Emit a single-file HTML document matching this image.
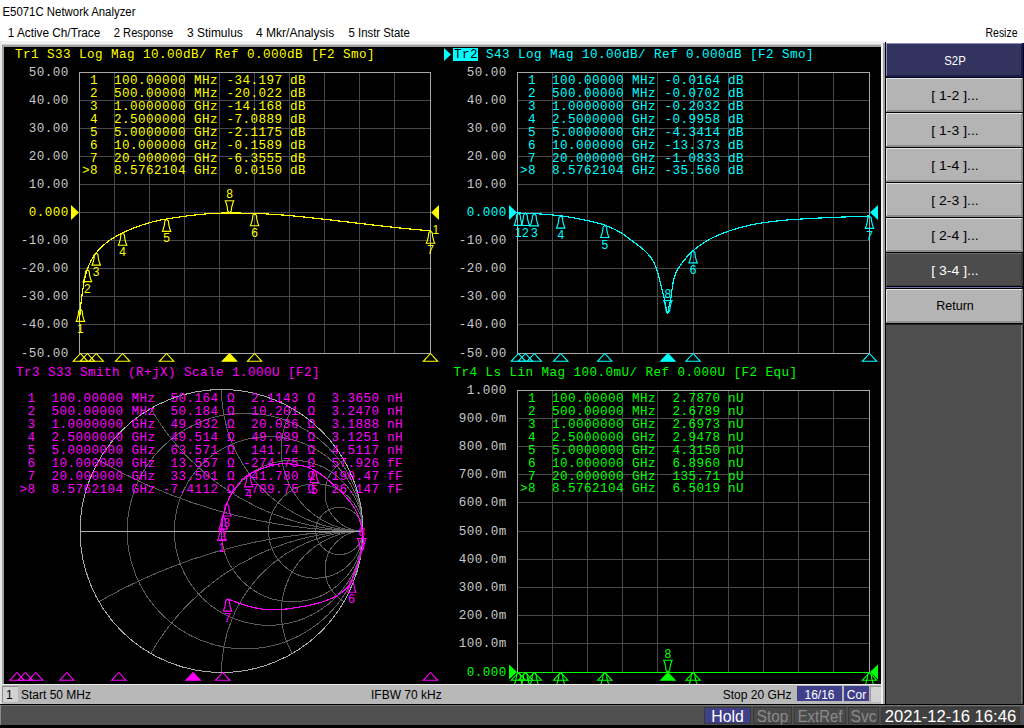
<!DOCTYPE html>
<html><head><meta charset="utf-8"><style>html,body{margin:0;padding:0;background:#fff;overflow:hidden}svg{display:block}text{white-space:pre}</style></head>
<body><svg width="1024" height="728" viewBox="0 0 1024 728">
<rect x="0" y="0" width="1024" height="728" fill="#ffffff" />
<text x="2.5" y="15.6" fill="#000" font-family="Liberation Sans, sans-serif" font-size="12" textLength="133" lengthAdjust="spacingAndGlyphs">E5071C Network Analyzer</text>
<text x="7.8" y="36.7" fill="#000" font-family="Liberation Sans, sans-serif" font-size="12" textLength="92.5" lengthAdjust="spacingAndGlyphs">1 Active Ch/Trace</text>
<text x="113.8" y="36.7" fill="#000" font-family="Liberation Sans, sans-serif" font-size="12" textLength="59.5" lengthAdjust="spacingAndGlyphs">2 Response</text>
<text x="187" y="36.7" fill="#000" font-family="Liberation Sans, sans-serif" font-size="12" textLength="55.8" lengthAdjust="spacingAndGlyphs">3 Stimulus</text>
<text x="256" y="36.7" fill="#000" font-family="Liberation Sans, sans-serif" font-size="12" textLength="78.3" lengthAdjust="spacingAndGlyphs">4 Mkr/Analysis</text>
<text x="348.5" y="36.7" fill="#000" font-family="Liberation Sans, sans-serif" font-size="12" textLength="61.3" lengthAdjust="spacingAndGlyphs">5 Instr State</text>
<text x="985.5" y="36.7" fill="#000" font-family="Liberation Sans, sans-serif" font-size="12" textLength="32" lengthAdjust="spacingAndGlyphs">Resize</text>
<rect x="0" y="41" width="886" height="3" fill="#f0f0f0" />
<rect x="0" y="44" width="886" height="1" fill="#d0d0d0" />
<rect x="0" y="45" width="886" height="2" fill="#a0a0a0" />
<rect x="0" y="41" width="2" height="643" fill="#e8e8e8" />
<rect x="2" y="45" width="2" height="639" fill="#a0a0a0" />
<rect x="4" y="47" width="877" height="637" fill="#000000" />
<rect x="881" y="41" width="2" height="663" fill="#f0f0f0" />
<rect x="883" y="43" width="2" height="661" fill="#a0a0a0" />
<rect x="885" y="42" width="1" height="662" fill="#000000" />
<rect x="886" y="43" width="138" height="661" fill="#4e4e4e" />
<rect x="1023" y="43" width="1" height="661" fill="#000000" />
<rect x="886" y="43" width="138" height="35" fill="#000028" />
<rect x="886" y="43" width="137" height="34" fill="#1c1c40" />
<rect x="886" y="43" width="135" height="32" fill="#33335f" />
<rect x="886" y="43" width="136" height="1" fill="#8c8cc8" />
<rect x="886" y="43" width="1" height="33" fill="#8c8cc8" />
<text x="955" y="65" fill="#ffffff" font-family="Liberation Sans, sans-serif" font-size="13" text-anchor="middle" textLength="21.5" lengthAdjust="spacingAndGlyphs">S2P</text>
<rect x="886" y="78" width="138" height="35" fill="#000000" />
<rect x="886" y="78" width="137" height="34" fill="#8e8e8e" />
<rect x="886" y="78" width="135" height="32" fill="#b4b4b4" />
<rect x="886" y="78" width="136" height="1" fill="#e6e6e6" />
<rect x="886" y="78" width="1" height="33" fill="#e6e6e6" />
<text x="955" y="100" fill="#000000" font-family="Liberation Sans, sans-serif" font-size="13" text-anchor="middle" textLength="47.5" lengthAdjust="spacingAndGlyphs">[ 1-2 ]...</text>
<rect x="886" y="113" width="138" height="35" fill="#000000" />
<rect x="886" y="113" width="137" height="34" fill="#8e8e8e" />
<rect x="886" y="113" width="135" height="32" fill="#b4b4b4" />
<rect x="886" y="113" width="136" height="1" fill="#e6e6e6" />
<rect x="886" y="113" width="1" height="33" fill="#e6e6e6" />
<text x="955" y="135" fill="#000000" font-family="Liberation Sans, sans-serif" font-size="13" text-anchor="middle" textLength="47.5" lengthAdjust="spacingAndGlyphs">[ 1-3 ]...</text>
<rect x="886" y="148" width="138" height="35" fill="#000000" />
<rect x="886" y="148" width="137" height="34" fill="#8e8e8e" />
<rect x="886" y="148" width="135" height="32" fill="#b4b4b4" />
<rect x="886" y="148" width="136" height="1" fill="#e6e6e6" />
<rect x="886" y="148" width="1" height="33" fill="#e6e6e6" />
<text x="955" y="170" fill="#000000" font-family="Liberation Sans, sans-serif" font-size="13" text-anchor="middle" textLength="47.5" lengthAdjust="spacingAndGlyphs">[ 1-4 ]...</text>
<rect x="886" y="183" width="138" height="35" fill="#000000" />
<rect x="886" y="183" width="137" height="34" fill="#8e8e8e" />
<rect x="886" y="183" width="135" height="32" fill="#b4b4b4" />
<rect x="886" y="183" width="136" height="1" fill="#e6e6e6" />
<rect x="886" y="183" width="1" height="33" fill="#e6e6e6" />
<text x="955" y="205" fill="#000000" font-family="Liberation Sans, sans-serif" font-size="13" text-anchor="middle" textLength="47.5" lengthAdjust="spacingAndGlyphs">[ 2-3 ]...</text>
<rect x="886" y="218" width="138" height="35" fill="#000000" />
<rect x="886" y="218" width="137" height="34" fill="#8e8e8e" />
<rect x="886" y="218" width="135" height="32" fill="#b4b4b4" />
<rect x="886" y="218" width="136" height="1" fill="#e6e6e6" />
<rect x="886" y="218" width="1" height="33" fill="#e6e6e6" />
<text x="955" y="240" fill="#000000" font-family="Liberation Sans, sans-serif" font-size="13" text-anchor="middle" textLength="47.5" lengthAdjust="spacingAndGlyphs">[ 2-4 ]...</text>
<rect x="886" y="253" width="138" height="35" fill="#000000" />
<rect x="886" y="253" width="137" height="34" fill="#3a3a3a" />
<rect x="886" y="253" width="135" height="32" fill="#4c4c4c" />
<rect x="886" y="253" width="136" height="1" fill="#6a6a6a" />
<rect x="886" y="253" width="1" height="33" fill="#6a6a6a" />
<text x="955" y="275" fill="#ffffff" font-family="Liberation Sans, sans-serif" font-size="13" text-anchor="middle" textLength="47.5" lengthAdjust="spacingAndGlyphs">[ 3-4 ]...</text>
<rect x="886" y="286" width="137" height="4" fill="#000000" />
<rect x="886" y="287" width="136" height="1" fill="#6c6cb0" />
<rect x="886" y="289" width="138" height="35" fill="#000000" />
<rect x="886" y="289" width="137" height="34" fill="#8e8e8e" />
<rect x="886" y="289" width="135" height="32" fill="#b4b4b4" />
<rect x="886" y="289" width="136" height="1" fill="#e6e6e6" />
<rect x="886" y="289" width="1" height="33" fill="#e6e6e6" />
<text x="955" y="310" fill="#000000" font-family="Liberation Sans, sans-serif" font-size="13" text-anchor="middle" textLength="37.5" lengthAdjust="spacingAndGlyphs">Return</text>
<rect x="886" y="324" width="136" height="1" fill="#202020" />
<rect x="1021" y="325" width="1" height="378" fill="#7a7a7a" />
<rect x="0" y="684" width="881" height="20" fill="#b8b8b8" />
<rect x="0" y="684" width="881" height="1" fill="#ececec" />
<rect x="0" y="684" width="2" height="20" fill="#e0e0e0" />
<rect x="2" y="686" width="16" height="16" fill="#8c8c8c" />
<rect x="3" y="687" width="15" height="15" fill="#d2d2d2" />
<text x="6" y="698.7" fill="#000" font-family="Liberation Sans, sans-serif" font-size="12" >1</text>
<text x="21" y="698.7" fill="#000" font-family="Liberation Sans, sans-serif" font-size="12" >Start 50 MHz</text>
<text x="371" y="698.7" fill="#000" font-family="Liberation Sans, sans-serif" font-size="12" >IFBW 70 kHz</text>
<text x="722.7" y="698.7" fill="#000" font-family="Liberation Sans, sans-serif" font-size="12" >Stop 20 GHz</text>
<rect x="797" y="686" width="45" height="15" fill="#3f3f8a" />
<text x="819.5" y="699" fill="#fff" font-family="Liberation Sans, sans-serif" font-size="12" text-anchor="middle" >16/16</text>
<rect x="844" y="686" width="25" height="15" fill="#3f3f8a" />
<text x="856.5" y="699" fill="#fff" font-family="Liberation Sans, sans-serif" font-size="12" text-anchor="middle" >Cor</text>
<rect x="870" y="686" width="11" height="16" fill="#9a9a9a" />
<rect x="871" y="687" width="10" height="15" fill="#d2d2d2" />
<rect x="0" y="704" width="1024" height="24" fill="#000000" />
<rect x="0" y="705" width="1024" height="20" fill="#505050" />
<rect x="0" y="705" width="1024" height="1" fill="#707070" />
<rect x="0" y="705" width="1" height="20" fill="#8a8a8a" />
<rect x="704" y="707" width="47" height="17" fill="#383838" />
<rect x="705" y="708" width="45" height="15" fill="#3f3f8a" />
<text x="727.5" y="721.5" fill="#ffffff" font-family="Liberation Sans, sans-serif" font-size="16" text-anchor="middle" textLength="32.5" lengthAdjust="spacingAndGlyphs">Hold</text>
<rect x="753" y="707" width="39" height="17" fill="#383838" />
<rect x="754" y="708" width="37" height="15" fill="#4a4a4a" />
<text x="772.5" y="721.5" fill="#8a8a8a" font-family="Liberation Sans, sans-serif" font-size="16" text-anchor="middle" textLength="31.3" lengthAdjust="spacingAndGlyphs">Stop</text>
<rect x="794" y="707" width="52" height="17" fill="#383838" />
<rect x="795" y="708" width="50" height="15" fill="#4a4a4a" />
<text x="820.0" y="721.5" fill="#8a8a8a" font-family="Liberation Sans, sans-serif" font-size="16" text-anchor="middle" textLength="44.6" lengthAdjust="spacingAndGlyphs">ExtRef</text>
<rect x="848" y="707" width="31" height="17" fill="#383838" />
<rect x="849" y="708" width="29" height="15" fill="#4a4a4a" />
<text x="863.5" y="721.5" fill="#8a8a8a" font-family="Liberation Sans, sans-serif" font-size="16" text-anchor="middle" textLength="26" lengthAdjust="spacingAndGlyphs">Svc</text>
<rect x="881" y="707" width="139" height="17" fill="#383838" />
<rect x="882" y="708" width="137" height="15" fill="#404040" />
<text x="950.5" y="721.5" fill="#ffffff" font-family="Liberation Sans, sans-serif" font-size="16" text-anchor="middle" textLength="131.5" lengthAdjust="spacingAndGlyphs">2021-12-16 16:46</text>
<clipPath id="disp"><rect x="4" y="47" width="877" height="637"/></clipPath>
<g clip-path="url(#disp)">
<text x="15" y="58" fill="#ffff00" font-family="Liberation Mono, monospace" font-size="12.6" letter-spacing="0.44" >Tr1 S33 Log Mag 10.00dB/ Ref 0.000dB [F2 Smo]</text>
<path d="M444 48L451 54.5L444 61Z" fill="#00ffff"/>
<rect x="453" y="48" width="25" height="13" fill="#00ffff" />
<text x="454" y="58" fill="#000" font-family="Liberation Mono, monospace" font-size="12.6" letter-spacing="0.44" >Tr2</text>
<text x="486" y="58" fill="#00ffff" font-family="Liberation Mono, monospace" font-size="12.6" letter-spacing="0.44" >S43 Log Mag 10.00dB/ Ref 0.000dB [F2 Smo]</text>
<text x="16" y="376" fill="#ff00ff" font-family="Liberation Mono, monospace" font-size="12.6" letter-spacing="0.44" >Tr3 S33 Smith (R+jX) Scale 1.000U [F2]</text>
<text x="453.5" y="376" fill="#00ff00" font-family="Liberation Mono, monospace" font-size="12.6" letter-spacing="0.44" >Tr4 Ls Lin Mag 100.0mU/ Ref 0.000U [F2 Equ]</text>
<rect x="114" y="72" width="1" height="281" fill="#484848"/>
<rect x="79" y="100" width="351" height="1" fill="#484848"/>
<rect x="149" y="72" width="1" height="281" fill="#484848"/>
<rect x="79" y="128" width="351" height="1" fill="#484848"/>
<rect x="184" y="72" width="1" height="281" fill="#484848"/>
<rect x="79" y="156" width="351" height="1" fill="#484848"/>
<rect x="219" y="72" width="1" height="281" fill="#484848"/>
<rect x="79" y="184" width="351" height="1" fill="#484848"/>
<rect x="254" y="72" width="1" height="281" fill="#484848"/>
<rect x="79" y="212" width="351" height="1" fill="#484848"/>
<rect x="289" y="72" width="1" height="281" fill="#484848"/>
<rect x="79" y="240" width="351" height="1" fill="#484848"/>
<rect x="324" y="72" width="1" height="281" fill="#484848"/>
<rect x="79" y="268" width="351" height="1" fill="#484848"/>
<rect x="359" y="72" width="1" height="281" fill="#484848"/>
<rect x="79" y="296" width="351" height="1" fill="#484848"/>
<rect x="394" y="72" width="1" height="281" fill="#484848"/>
<rect x="79" y="324" width="351" height="1" fill="#484848"/>
<rect x="79" y="72" width="352" height="1" fill="#a8a8a8"/>
<rect x="79" y="353" width="352" height="1" fill="#a8a8a8"/>
<rect x="79" y="72" width="1" height="282" fill="#a8a8a8"/>
<rect x="430" y="72" width="1" height="282" fill="#a8a8a8"/>
<text x="68.7" y="76" fill="#c8c8c8" font-family="Liberation Mono, monospace" font-size="12.6" letter-spacing="0.44" text-anchor="end" >50.00</text>
<text x="68.7" y="104" fill="#c8c8c8" font-family="Liberation Mono, monospace" font-size="12.6" letter-spacing="0.44" text-anchor="end" >40.00</text>
<text x="68.7" y="132" fill="#c8c8c8" font-family="Liberation Mono, monospace" font-size="12.6" letter-spacing="0.44" text-anchor="end" >30.00</text>
<text x="68.7" y="160" fill="#c8c8c8" font-family="Liberation Mono, monospace" font-size="12.6" letter-spacing="0.44" text-anchor="end" >20.00</text>
<text x="68.7" y="188" fill="#c8c8c8" font-family="Liberation Mono, monospace" font-size="12.6" letter-spacing="0.44" text-anchor="end" >10.00</text>
<text x="68.7" y="216" fill="#ffff00" font-family="Liberation Mono, monospace" font-size="12.6" letter-spacing="0.44" text-anchor="end" >0.000</text>
<text x="68.7" y="244" fill="#c8c8c8" font-family="Liberation Mono, monospace" font-size="12.6" letter-spacing="0.44" text-anchor="end" >-10.00</text>
<text x="68.7" y="272" fill="#c8c8c8" font-family="Liberation Mono, monospace" font-size="12.6" letter-spacing="0.44" text-anchor="end" >-20.00</text>
<text x="68.7" y="300" fill="#c8c8c8" font-family="Liberation Mono, monospace" font-size="12.6" letter-spacing="0.44" text-anchor="end" >-30.00</text>
<text x="68.7" y="328" fill="#c8c8c8" font-family="Liberation Mono, monospace" font-size="12.6" letter-spacing="0.44" text-anchor="end" >-40.00</text>
<text x="68.7" y="357" fill="#c8c8c8" font-family="Liberation Mono, monospace" font-size="12.6" letter-spacing="0.44" text-anchor="end" >-50.00</text>
<path d="M71 205.0L79 212.5L71 220.0Z" fill="#ffff00"/>
<path d="M439 205.0L431 212.5L439 220.0Z" fill="#ffff00"/>
<text x="90" y="83.8" fill="#ffff00" font-family="Liberation Mono, monospace" font-size="12.6" letter-spacing="0.44" >1</text>
<text x="114" y="83.8" fill="#ffff00" font-family="Liberation Mono, monospace" font-size="12.6" letter-spacing="0.44" >100.00000</text>
<text x="194" y="83.8" fill="#ffff00" font-family="Liberation Mono, monospace" font-size="12.6" letter-spacing="0.44" >MHz</text>
<text x="282.5" y="83.8" fill="#ffff00" font-family="Liberation Mono, monospace" font-size="12.6" letter-spacing="0.44" text-anchor="end" >-34.197</text>
<text x="290" y="83.8" fill="#ffff00" font-family="Liberation Mono, monospace" font-size="12.6" letter-spacing="0.44" >dB</text>
<text x="90" y="96.75" fill="#ffff00" font-family="Liberation Mono, monospace" font-size="12.6" letter-spacing="0.44" >2</text>
<text x="114" y="96.75" fill="#ffff00" font-family="Liberation Mono, monospace" font-size="12.6" letter-spacing="0.44" >500.00000</text>
<text x="194" y="96.75" fill="#ffff00" font-family="Liberation Mono, monospace" font-size="12.6" letter-spacing="0.44" >MHz</text>
<text x="282.5" y="96.75" fill="#ffff00" font-family="Liberation Mono, monospace" font-size="12.6" letter-spacing="0.44" text-anchor="end" >-20.022</text>
<text x="290" y="96.75" fill="#ffff00" font-family="Liberation Mono, monospace" font-size="12.6" letter-spacing="0.44" >dB</text>
<text x="90" y="109.69999999999999" fill="#ffff00" font-family="Liberation Mono, monospace" font-size="12.6" letter-spacing="0.44" >3</text>
<text x="114" y="109.69999999999999" fill="#ffff00" font-family="Liberation Mono, monospace" font-size="12.6" letter-spacing="0.44" >1.0000000</text>
<text x="194" y="109.69999999999999" fill="#ffff00" font-family="Liberation Mono, monospace" font-size="12.6" letter-spacing="0.44" >GHz</text>
<text x="282.5" y="109.69999999999999" fill="#ffff00" font-family="Liberation Mono, monospace" font-size="12.6" letter-spacing="0.44" text-anchor="end" >-14.168</text>
<text x="290" y="109.69999999999999" fill="#ffff00" font-family="Liberation Mono, monospace" font-size="12.6" letter-spacing="0.44" >dB</text>
<text x="90" y="122.64999999999999" fill="#ffff00" font-family="Liberation Mono, monospace" font-size="12.6" letter-spacing="0.44" >4</text>
<text x="114" y="122.64999999999999" fill="#ffff00" font-family="Liberation Mono, monospace" font-size="12.6" letter-spacing="0.44" >2.5000000</text>
<text x="194" y="122.64999999999999" fill="#ffff00" font-family="Liberation Mono, monospace" font-size="12.6" letter-spacing="0.44" >GHz</text>
<text x="282.5" y="122.64999999999999" fill="#ffff00" font-family="Liberation Mono, monospace" font-size="12.6" letter-spacing="0.44" text-anchor="end" >-7.0889</text>
<text x="290" y="122.64999999999999" fill="#ffff00" font-family="Liberation Mono, monospace" font-size="12.6" letter-spacing="0.44" >dB</text>
<text x="90" y="135.6" fill="#ffff00" font-family="Liberation Mono, monospace" font-size="12.6" letter-spacing="0.44" >5</text>
<text x="114" y="135.6" fill="#ffff00" font-family="Liberation Mono, monospace" font-size="12.6" letter-spacing="0.44" >5.0000000</text>
<text x="194" y="135.6" fill="#ffff00" font-family="Liberation Mono, monospace" font-size="12.6" letter-spacing="0.44" >GHz</text>
<text x="282.5" y="135.6" fill="#ffff00" font-family="Liberation Mono, monospace" font-size="12.6" letter-spacing="0.44" text-anchor="end" >-2.1175</text>
<text x="290" y="135.6" fill="#ffff00" font-family="Liberation Mono, monospace" font-size="12.6" letter-spacing="0.44" >dB</text>
<text x="90" y="148.55" fill="#ffff00" font-family="Liberation Mono, monospace" font-size="12.6" letter-spacing="0.44" >6</text>
<text x="114" y="148.55" fill="#ffff00" font-family="Liberation Mono, monospace" font-size="12.6" letter-spacing="0.44" >10.000000</text>
<text x="194" y="148.55" fill="#ffff00" font-family="Liberation Mono, monospace" font-size="12.6" letter-spacing="0.44" >GHz</text>
<text x="282.5" y="148.55" fill="#ffff00" font-family="Liberation Mono, monospace" font-size="12.6" letter-spacing="0.44" text-anchor="end" >-0.1589</text>
<text x="290" y="148.55" fill="#ffff00" font-family="Liberation Mono, monospace" font-size="12.6" letter-spacing="0.44" >dB</text>
<text x="90" y="161.5" fill="#ffff00" font-family="Liberation Mono, monospace" font-size="12.6" letter-spacing="0.44" >7</text>
<text x="114" y="161.5" fill="#ffff00" font-family="Liberation Mono, monospace" font-size="12.6" letter-spacing="0.44" >20.000000</text>
<text x="194" y="161.5" fill="#ffff00" font-family="Liberation Mono, monospace" font-size="12.6" letter-spacing="0.44" >GHz</text>
<text x="282.5" y="161.5" fill="#ffff00" font-family="Liberation Mono, monospace" font-size="12.6" letter-spacing="0.44" text-anchor="end" >-6.3555</text>
<text x="290" y="161.5" fill="#ffff00" font-family="Liberation Mono, monospace" font-size="12.6" letter-spacing="0.44" >dB</text>
<text x="82" y="174.45" fill="#ffff00" font-family="Liberation Mono, monospace" font-size="12.6" letter-spacing="0.44" >&gt;8</text>
<text x="114" y="174.45" fill="#ffff00" font-family="Liberation Mono, monospace" font-size="12.6" letter-spacing="0.44" >8.5762104</text>
<text x="194" y="174.45" fill="#ffff00" font-family="Liberation Mono, monospace" font-size="12.6" letter-spacing="0.44" >GHz</text>
<text x="282.5" y="174.45" fill="#ffff00" font-family="Liberation Mono, monospace" font-size="12.6" letter-spacing="0.44" text-anchor="end" >0.0150</text>
<text x="290" y="174.45" fill="#ffff00" font-family="Liberation Mono, monospace" font-size="12.6" letter-spacing="0.44" >dB</text>
<polyline points="79.50,321.19 79.75,317.20 80.00,313.62 80.25,310.50 80.50,307.81 80.75,305.33 81.01,303.01 81.26,300.82 81.51,298.74 81.76,296.77 82.01,294.89 82.26,293.11 82.51,291.40 82.76,289.77 83.01,288.21 83.26,286.71 83.51,285.28 83.77,283.91 84.02,282.59 84.27,281.33 84.52,280.12 84.77,278.95 85.02,277.84 85.27,276.77 85.52,275.74 85.77,274.76 86.02,273.81 86.27,272.91 86.53,272.04 86.78,271.22 87.03,270.42 87.28,269.67 87.53,268.94 87.78,268.25 88.03,267.57 88.28,266.91 88.53,266.27 88.78,265.65 89.03,265.05 89.28,264.46 89.54,263.89 89.79,263.34 90.04,262.80 90.29,262.27 90.54,261.76 90.79,261.26 91.04,260.77 91.29,260.29 91.54,259.83 91.79,259.38 92.04,258.93 92.30,258.50 92.55,258.08 92.80,257.66 93.05,257.26 93.30,256.86 93.55,256.48 93.80,256.10 94.05,255.73 94.30,255.36 94.55,255.01 94.80,254.66 95.06,254.31 95.31,253.98 95.56,253.65 95.81,253.32 96.06,253.01 96.31,252.69 96.56,252.39 96.81,252.08 97.06,251.78 97.31,251.49 97.56,251.19 97.82,250.90 98.07,250.62 98.32,250.34 98.57,250.06 98.82,249.78 99.07,249.51 99.32,249.25 99.57,248.98 99.82,248.72 100.07,248.46 100.32,248.20 100.58,247.95 100.83,247.70 101.08,247.45 101.33,247.21 101.58,246.97 101.83,246.73 102.08,246.49 102.33,246.26 102.58,246.02 102.83,245.79 103.08,245.57 103.33,245.34 103.59,245.12 103.84,244.90 104.09,244.68 104.34,244.47 104.59,244.26 104.84,244.04 105.09,243.84 105.34,243.63 105.59,243.42 105.84,243.22 106.09,243.02 106.35,242.82 106.60,242.62 106.85,242.43 107.10,242.23 107.35,242.04 107.60,241.85 107.85,241.66 108.10,241.48 108.35,241.29 108.60,241.11 108.85,240.93 109.11,240.75 109.36,240.57 109.61,240.39 109.86,240.22 110.11,240.04 110.36,239.87 110.61,239.70 110.86,239.53 111.11,239.36 111.36,239.20 111.61,239.03 111.87,238.87 112.12,238.71 112.37,238.55 112.62,238.39 112.87,238.23 113.12,238.07 113.37,237.92 113.62,237.76 113.87,237.61 114.12,237.46 114.37,237.30 114.63,237.15 114.88,237.01 115.13,236.86 115.38,236.71 115.63,236.57 115.88,236.42 116.13,236.28 116.38,236.14 116.63,236.00 116.88,235.86 117.13,235.72 117.38,235.58 117.64,235.44 117.89,235.31 118.14,235.17 118.39,235.04 118.64,234.90 118.89,234.77 119.14,234.64 119.39,234.51 119.64,234.38 119.89,234.25 120.14,234.13 120.40,234.00 120.65,233.87 120.90,233.75 121.15,233.62 121.40,233.50 121.65,233.38 121.90,233.26 122.15,233.14 122.40,233.02 122.65,232.90 122.90,232.78 123.16,232.66 123.41,232.54 123.66,232.42 123.91,232.31 124.16,232.19 124.41,232.07 124.66,231.96 124.91,231.84 125.16,231.73 125.41,231.61 125.66,231.50 125.92,231.39 126.17,231.27 126.42,231.16 126.67,231.05 126.92,230.93 127.17,230.82 127.42,230.71 127.67,230.60 127.92,230.49 128.17,230.38 128.42,230.27 128.68,230.16 128.93,230.05 129.18,229.95 129.43,229.84 129.68,229.73 129.93,229.62 130.18,229.52 130.43,229.41 130.68,229.31 130.93,229.20 131.18,229.10 131.43,228.99 131.69,228.89 131.94,228.79 132.19,228.68 132.44,228.58 132.69,228.48 132.94,228.38 133.19,228.28 133.44,228.18 133.69,228.08 133.94,227.98 134.19,227.88 134.45,227.78 134.70,227.68 134.95,227.58 135.20,227.49 135.45,227.39 135.70,227.29 135.95,227.20 136.20,227.10 136.45,227.01 136.70,226.91 136.95,226.82 137.21,226.72 137.46,226.63 137.71,226.54 137.96,226.45 138.21,226.35 138.46,226.26 138.71,226.17 138.96,226.08 139.21,225.99 139.46,225.90 139.71,225.81 139.97,225.72 140.22,225.64 140.47,225.55 140.72,225.46 140.97,225.38 141.22,225.29 141.47,225.20 141.72,225.12 141.97,225.03 142.22,224.95 142.47,224.86 142.73,224.78 142.98,224.70 143.23,224.61 143.48,224.53 143.73,224.45 143.98,224.37 144.23,224.29 144.48,224.21 144.73,224.13 144.98,224.05 145.23,223.97 145.48,223.89 145.74,223.81 145.99,223.74 146.24,223.66 146.49,223.58 146.74,223.51 146.99,223.43 147.24,223.36 147.49,223.28 147.74,223.21 147.99,223.13 148.24,223.06 148.50,222.99 148.75,222.91 149.00,222.84 149.25,222.77 149.50,222.70 149.75,222.63 150.00,222.56 150.25,222.49 150.50,222.42 150.75,222.35 151.00,222.28 151.26,222.22 151.51,222.15 151.76,222.08 152.01,222.02 152.26,221.95 152.51,221.88 152.76,221.82 153.01,221.75 153.26,221.69 153.51,221.63 153.76,221.56 154.02,221.50 154.27,221.44 154.52,221.38 154.77,221.32 155.02,221.26 155.27,221.19 155.52,221.14 155.77,221.08 156.02,221.02 156.27,220.96 156.52,220.90 156.78,220.84 157.03,220.79 157.28,220.73 157.53,220.67 157.78,220.62 158.03,220.56 158.28,220.51 158.53,220.45 158.78,220.40 159.03,220.34 159.28,220.29 159.54,220.24 159.79,220.19 160.04,220.14 160.29,220.08 160.54,220.03 160.79,219.98 161.04,219.93 161.29,219.88 161.54,219.84 161.79,219.79 162.04,219.74 162.29,219.69 162.55,219.64 162.80,219.60 163.05,219.55 163.30,219.51 163.55,219.46 163.80,219.42 164.05,219.37 164.30,219.33 164.55,219.29 164.80,219.24 165.05,219.20 165.31,219.16 165.56,219.12 165.81,219.08 166.06,219.03 166.31,218.99 166.56,218.95 166.81,218.92 167.06,218.88 167.31,218.84 167.56,218.80 167.81,218.76 168.07,218.72 168.32,218.68 168.57,218.64 168.82,218.60 169.07,218.56 169.32,218.52 169.57,218.48 169.82,218.44 170.07,218.41 170.32,218.37 170.57,218.33 170.83,218.29 171.08,218.25 171.33,218.21 171.58,218.17 171.83,218.13 172.08,218.10 172.33,218.06 172.58,218.02 172.83,217.98 173.08,217.94 173.33,217.90 173.59,217.87 173.84,217.83 174.09,217.79 174.34,217.75 174.59,217.71 174.84,217.68 175.09,217.64 175.34,217.60 175.59,217.56 175.84,217.52 176.09,217.49 176.34,217.45 176.60,217.41 176.85,217.38 177.10,217.34 177.35,217.30 177.60,217.26 177.85,217.23 178.10,217.19 178.35,217.15 178.60,217.12 178.85,217.08 179.10,217.04 179.36,217.01 179.61,216.97 179.86,216.94 180.11,216.90 180.36,216.86 180.61,216.83 180.86,216.79 181.11,216.76 181.36,216.72 181.61,216.69 181.86,216.65 182.12,216.62 182.37,216.58 182.62,216.55 182.87,216.51 183.12,216.48 183.37,216.44 183.62,216.41 183.87,216.37 184.12,216.34 184.37,216.31 184.62,216.27 184.88,216.24 185.13,216.20 185.38,216.17 185.63,216.14 185.88,216.10 186.13,216.07 186.38,216.04 186.63,216.00 186.88,215.97 187.13,215.94 187.38,215.91 187.64,215.87 187.89,215.84 188.14,215.81 188.39,215.78 188.64,215.75 188.89,215.71 189.14,215.68 189.39,215.65 189.64,215.62 189.89,215.59 190.14,215.56 190.39,215.53 190.65,215.50 190.90,215.47 191.15,215.44 191.40,215.40 191.65,215.37 191.90,215.34 192.15,215.32 192.40,215.29 192.65,215.26 192.90,215.23 193.15,215.20 193.41,215.17 193.66,215.14 193.91,215.11 194.16,215.08 194.41,215.05 194.66,215.03 194.91,215.00 195.16,214.97 195.41,214.94 195.66,214.91 195.91,214.89 196.17,214.86 196.42,214.83 196.67,214.81 196.92,214.78 197.17,214.75 197.42,214.73 197.67,214.70 197.92,214.67 198.17,214.65 198.42,214.62 198.67,214.60 198.93,214.57 199.18,214.55 199.43,214.52 199.68,214.50 199.93,214.47 200.18,214.45 200.43,214.42 200.68,214.40 200.93,214.37 201.18,214.35 201.43,214.33 201.69,214.30 201.94,214.28 202.19,214.26 202.44,214.23 202.69,214.21 202.94,214.19 203.19,214.17 203.44,214.14 203.69,214.12 203.94,214.10 204.19,214.08 204.44,214.06 204.70,214.04 204.95,214.02 205.20,214.00 205.45,213.97 205.70,213.95 205.95,213.93 206.20,213.91 206.45,213.89 206.70,213.87 206.95,213.85 207.20,213.84 207.46,213.82 207.71,213.80 207.96,213.78 208.21,213.76 208.46,213.74 208.71,213.72 208.96,213.71 209.21,213.69 209.46,213.67 209.71,213.65 209.96,213.64 210.22,213.62 210.47,213.60 210.72,213.59 210.97,213.57 211.22,213.55 211.47,213.54 211.72,213.52 211.97,213.51 212.22,213.49 212.47,213.48 212.72,213.46 212.98,213.45 213.23,213.43 213.48,213.42 213.73,213.40 213.98,213.39 214.23,213.38 214.48,213.36 214.73,213.35 214.98,213.34 215.23,213.32 215.48,213.31 215.74,213.30 215.99,213.29 216.24,213.28 216.49,213.26 216.74,213.25 216.99,213.24 217.24,213.23 217.49,213.22 217.74,213.21 217.99,213.20 218.24,213.19 218.49,213.18 218.75,213.17 219.00,213.16 219.25,213.15 219.50,213.14 219.75,213.13 220.00,213.12 220.25,213.11 220.50,213.11 220.75,213.10 221.00,213.09 221.25,213.08 221.51,213.07 221.76,213.07 222.01,213.06 222.26,213.05 222.51,213.05 222.76,213.04 223.01,213.04 223.26,213.03 223.51,213.02 223.76,213.02 224.01,213.01 224.27,213.01 224.52,213.00 224.77,213.00 225.02,212.99 225.27,212.99 225.52,212.99 225.77,212.98 226.02,212.98 226.27,212.98 226.52,212.97 226.77,212.97 227.03,212.97 227.28,212.97 227.53,212.97 227.78,212.96 228.03,212.96 228.28,212.96 228.53,212.96 228.78,212.96 229.03,212.96 229.28,212.96 229.53,212.96 229.79,212.96 230.04,212.96 230.29,212.96 230.54,212.96 230.79,212.96 231.04,212.96 231.29,212.96 231.54,212.96 231.79,212.96 232.04,212.97 232.29,212.97 232.55,212.97 232.80,212.97 233.05,212.97 233.30,212.98 233.55,212.98 233.80,212.98 234.05,212.98 234.30,212.98 234.55,212.99 234.80,212.99 235.05,212.99 235.30,213.00 235.56,213.00 235.81,213.00 236.06,213.01 236.31,213.01 236.56,213.01 236.81,213.02 237.06,213.02 237.31,213.03 237.56,213.03 237.81,213.03 238.06,213.04 238.32,213.04 238.57,213.05 238.82,213.05 239.07,213.06 239.32,213.06 239.57,213.07 239.82,213.07 240.07,213.08 240.32,213.08 240.57,213.09 240.82,213.09 241.08,213.10 241.33,213.10 241.58,213.11 241.83,213.11 242.08,213.12 242.33,213.12 242.58,213.13 242.83,213.14 243.08,213.14 243.33,213.15 243.58,213.15 243.84,213.16 244.09,213.17 244.34,213.17 244.59,213.18 244.84,213.18 245.09,213.19 245.34,213.20 245.59,213.20 245.84,213.21 246.09,213.22 246.34,213.22 246.60,213.23 246.85,213.23 247.10,213.24 247.35,213.25 247.60,213.25 247.85,213.26 248.10,213.27 248.35,213.27 248.60,213.28 248.85,213.29 249.10,213.30 249.35,213.30 249.61,213.31 249.86,213.32 250.11,213.32 250.36,213.33 250.61,213.34 250.86,213.34 251.11,213.35 251.36,213.36 251.61,213.36 251.86,213.37 252.11,213.38 252.37,213.39 252.62,213.39 252.87,213.40 253.12,213.41 253.37,213.41 253.62,213.42 253.87,213.43 254.12,213.43 254.37,213.44 254.62,213.45 254.87,213.46 255.13,213.46 255.38,213.47 255.63,213.48 255.88,213.49 256.13,213.49 256.38,213.50 256.63,213.51 256.88,213.52 257.13,213.53 257.38,213.53 257.63,213.54 257.89,213.55 258.14,213.56 258.39,213.57 258.64,213.58 258.89,213.59 259.14,213.60 259.39,213.61 259.64,213.62 259.89,213.63 260.14,213.64 260.39,213.65 260.65,213.66 260.90,213.67 261.15,213.68 261.40,213.69 261.65,213.70 261.90,213.71 262.15,213.72 262.40,213.74 262.65,213.75 262.90,213.76 263.15,213.77 263.40,213.78 263.66,213.79 263.91,213.81 264.16,213.82 264.41,213.83 264.66,213.84 264.91,213.86 265.16,213.87 265.41,213.88 265.66,213.89 265.91,213.91 266.16,213.92 266.42,213.93 266.67,213.95 266.92,213.96 267.17,213.98 267.42,213.99 267.67,214.00 267.92,214.02 268.17,214.03 268.42,214.05 268.67,214.06 268.92,214.08 269.18,214.09 269.43,214.10 269.68,214.12 269.93,214.13 270.18,214.15 270.43,214.16 270.68,214.18 270.93,214.20 271.18,214.21 271.43,214.23 271.68,214.24 271.94,214.26 272.19,214.27 272.44,214.29 272.69,214.31 272.94,214.32 273.19,214.34 273.44,214.36 273.69,214.37 273.94,214.39 274.19,214.41 274.44,214.42 274.70,214.44 274.95,214.46 275.20,214.48 275.45,214.49 275.70,214.51 275.95,214.53 276.20,214.55 276.45,214.56 276.70,214.58 276.95,214.60 277.20,214.62 277.45,214.64 277.71,214.65 277.96,214.67 278.21,214.69 278.46,214.71 278.71,214.73 278.96,214.75 279.21,214.77 279.46,214.78 279.71,214.80 279.96,214.82 280.21,214.84 280.47,214.86 280.72,214.88 280.97,214.90 281.22,214.92 281.47,214.94 281.72,214.96 281.97,214.98 282.22,215.00 282.47,215.02 282.72,215.04 282.97,215.06 283.23,215.08 283.48,215.10 283.73,215.12 283.98,215.14 284.23,215.16 284.48,215.18 284.73,215.20 284.98,215.22 285.23,215.24 285.48,215.27 285.73,215.29 285.99,215.31 286.24,215.33 286.49,215.35 286.74,215.37 286.99,215.39 287.24,215.41 287.49,215.44 287.74,215.46 287.99,215.48 288.24,215.50 288.49,215.52 288.75,215.55 289.00,215.57 289.25,215.59 289.50,215.61 289.75,215.63 290.00,215.66 290.25,215.68 290.50,215.70 290.75,215.72 291.00,215.75 291.25,215.77 291.51,215.79 291.76,215.82 292.01,215.84 292.26,215.86 292.51,215.89 292.76,215.91 293.01,215.93 293.26,215.96 293.51,215.98 293.76,216.00 294.01,216.03 294.26,216.05 294.52,216.07 294.77,216.10 295.02,216.12 295.27,216.14 295.52,216.17 295.77,216.19 296.02,216.22 296.27,216.24 296.52,216.26 296.77,216.29 297.02,216.31 297.28,216.34 297.53,216.36 297.78,216.39 298.03,216.41 298.28,216.43 298.53,216.46 298.78,216.48 299.03,216.51 299.28,216.53 299.53,216.56 299.78,216.58 300.04,216.61 300.29,216.63 300.54,216.66 300.79,216.68 301.04,216.71 301.29,216.73 301.54,216.76 301.79,216.79 302.04,216.81 302.29,216.84 302.54,216.86 302.80,216.89 303.05,216.91 303.30,216.94 303.55,216.96 303.80,216.99 304.05,217.02 304.30,217.04 304.55,217.07 304.80,217.09 305.05,217.12 305.30,217.15 305.56,217.17 305.81,217.20 306.06,217.22 306.31,217.25 306.56,217.28 306.81,217.30 307.06,217.33 307.31,217.36 307.56,217.38 307.81,217.41 308.06,217.44 308.31,217.46 308.57,217.49 308.82,217.52 309.07,217.54 309.32,217.57 309.57,217.60 309.82,217.62 310.07,217.65 310.32,217.68 310.57,217.70 310.82,217.73 311.07,217.76 311.33,217.79 311.58,217.81 311.83,217.84 312.08,217.87 312.33,217.89 312.58,217.92 312.83,217.95 313.08,217.98 313.33,218.00 313.58,218.03 313.83,218.06 314.09,218.09 314.34,218.11 314.59,218.14 314.84,218.17 315.09,218.20 315.34,218.23 315.59,218.25 315.84,218.28 316.09,218.31 316.34,218.34 316.59,218.36 316.85,218.39 317.10,218.42 317.35,218.45 317.60,218.48 317.85,218.50 318.10,218.53 318.35,218.56 318.60,218.59 318.85,218.62 319.10,218.65 319.35,218.67 319.61,218.70 319.86,218.73 320.11,218.76 320.36,218.79 320.61,218.82 320.86,218.84 321.11,218.87 321.36,218.90 321.61,218.93 321.86,218.96 322.11,218.99 322.36,219.02 322.62,219.04 322.87,219.07 323.12,219.10 323.37,219.13 323.62,219.16 323.87,219.19 324.12,219.22 324.37,219.24 324.62,219.27 324.87,219.30 325.12,219.33 325.38,219.36 325.63,219.39 325.88,219.42 326.13,219.45 326.38,219.48 326.63,219.51 326.88,219.53 327.13,219.56 327.38,219.59 327.63,219.62 327.88,219.65 328.14,219.68 328.39,219.71 328.64,219.74 328.89,219.77 329.14,219.80 329.39,219.83 329.64,219.86 329.89,219.88 330.14,219.91 330.39,219.94 330.64,219.97 330.90,220.00 331.15,220.03 331.40,220.06 331.65,220.09 331.90,220.12 332.15,220.15 332.40,220.18 332.65,220.21 332.90,220.24 333.15,220.27 333.40,220.30 333.66,220.33 333.91,220.36 334.16,220.38 334.41,220.41 334.66,220.44 334.91,220.47 335.16,220.50 335.41,220.53 335.66,220.56 335.91,220.59 336.16,220.62 336.41,220.65 336.67,220.68 336.92,220.71 337.17,220.74 337.42,220.77 337.67,220.80 337.92,220.83 338.17,220.86 338.42,220.89 338.67,220.92 338.92,220.95 339.17,220.98 339.43,221.01 339.68,221.04 339.93,221.07 340.18,221.10 340.43,221.13 340.68,221.16 340.93,221.19 341.18,221.22 341.43,221.25 341.68,221.28 341.93,221.31 342.19,221.34 342.44,221.37 342.69,221.40 342.94,221.43 343.19,221.46 343.44,221.49 343.69,221.52 343.94,221.55 344.19,221.57 344.44,221.60 344.69,221.63 344.95,221.66 345.20,221.69 345.45,221.72 345.70,221.75 345.95,221.78 346.20,221.81 346.45,221.84 346.70,221.87 346.95,221.90 347.20,221.93 347.45,221.96 347.71,221.99 347.96,222.02 348.21,222.05 348.46,222.08 348.71,222.11 348.96,222.14 349.21,222.17 349.46,222.20 349.71,222.23 349.96,222.26 350.21,222.29 350.46,222.32 350.72,222.35 350.97,222.38 351.22,222.41 351.47,222.44 351.72,222.47 351.97,222.50 352.22,222.53 352.47,222.56 352.72,222.59 352.97,222.62 353.22,222.65 353.48,222.68 353.73,222.71 353.98,222.74 354.23,222.77 354.48,222.80 354.73,222.83 354.98,222.86 355.23,222.89 355.48,222.92 355.73,222.95 355.98,222.98 356.24,223.01 356.49,223.04 356.74,223.07 356.99,223.10 357.24,223.13 357.49,223.16 357.74,223.19 357.99,223.22 358.24,223.25 358.49,223.28 358.74,223.31 359.00,223.34 359.25,223.37 359.50,223.40 359.75,223.43 360.00,223.46 360.25,223.49 360.50,223.52 360.75,223.55 361.00,223.58 361.25,223.61 361.50,223.64 361.76,223.67 362.01,223.69 362.26,223.72 362.51,223.75 362.76,223.78 363.01,223.81 363.26,223.84 363.51,223.87 363.76,223.90 364.01,223.93 364.26,223.96 364.52,223.99 364.77,224.02 365.02,224.05 365.27,224.08 365.52,224.11 365.77,224.14 366.02,224.17 366.27,224.20 366.52,224.23 366.77,224.26 367.02,224.29 367.27,224.31 367.53,224.34 367.78,224.37 368.03,224.40 368.28,224.43 368.53,224.46 368.78,224.49 369.03,224.52 369.28,224.55 369.53,224.58 369.78,224.61 370.03,224.64 370.29,224.67 370.54,224.70 370.79,224.72 371.04,224.75 371.29,224.78 371.54,224.81 371.79,224.84 372.04,224.87 372.29,224.90 372.54,224.93 372.79,224.96 373.05,224.99 373.30,225.02 373.55,225.04 373.80,225.07 374.05,225.10 374.30,225.13 374.55,225.16 374.80,225.19 375.05,225.22 375.30,225.25 375.55,225.28 375.81,225.30 376.06,225.33 376.31,225.36 376.56,225.39 376.81,225.42 377.06,225.45 377.31,225.48 377.56,225.51 377.81,225.53 378.06,225.56 378.31,225.59 378.57,225.62 378.82,225.65 379.07,225.68 379.32,225.71 379.57,225.73 379.82,225.76 380.07,225.79 380.32,225.82 380.57,225.85 380.82,225.88 381.07,225.90 381.32,225.93 381.58,225.96 381.83,225.99 382.08,226.02 382.33,226.05 382.58,226.07 382.83,226.10 383.08,226.13 383.33,226.16 383.58,226.19 383.83,226.21 384.08,226.24 384.34,226.27 384.59,226.30 384.84,226.33 385.09,226.35 385.34,226.38 385.59,226.41 385.84,226.44 386.09,226.47 386.34,226.49 386.59,226.52 386.84,226.55 387.10,226.58 387.35,226.60 387.60,226.63 387.85,226.66 388.10,226.69 388.35,226.72 388.60,226.74 388.85,226.77 389.10,226.80 389.35,226.83 389.60,226.85 389.86,226.88 390.11,226.91 390.36,226.94 390.61,226.96 390.86,226.99 391.11,227.02 391.36,227.04 391.61,227.07 391.86,227.10 392.11,227.13 392.36,227.15 392.62,227.18 392.87,227.21 393.12,227.23 393.37,227.26 393.62,227.29 393.87,227.32 394.12,227.34 394.37,227.37 394.62,227.40 394.87,227.42 395.12,227.45 395.37,227.48 395.63,227.50 395.88,227.53 396.13,227.56 396.38,227.58 396.63,227.61 396.88,227.64 397.13,227.66 397.38,227.69 397.63,227.72 397.88,227.74 398.13,227.77 398.39,227.80 398.64,227.82 398.89,227.85 399.14,227.87 399.39,227.90 399.64,227.93 399.89,227.95 400.14,227.98 400.39,228.01 400.64,228.03 400.89,228.06 401.15,228.08 401.40,228.11 401.65,228.14 401.90,228.16 402.15,228.19 402.40,228.21 402.65,228.24 402.90,228.26 403.15,228.29 403.40,228.32 403.65,228.34 403.91,228.37 404.16,228.39 404.41,228.42 404.66,228.44 404.91,228.47 405.16,228.49 405.41,228.52 405.66,228.55 405.91,228.57 406.16,228.60 406.41,228.62 406.67,228.65 406.92,228.67 407.17,228.70 407.42,228.72 407.67,228.75 407.92,228.77 408.17,228.80 408.42,228.82 408.67,228.85 408.92,228.87 409.17,228.90 409.42,228.92 409.68,228.95 409.93,228.97 410.18,229.00 410.43,229.02 410.68,229.05 410.93,229.07 411.18,229.09 411.43,229.12 411.68,229.14 411.93,229.17 412.18,229.19 412.44,229.22 412.69,229.24 412.94,229.27 413.19,229.29 413.44,229.31 413.69,229.34 413.94,229.36 414.19,229.39 414.44,229.41 414.69,229.43 414.94,229.46 415.20,229.48 415.45,229.51 415.70,229.53 415.95,229.55 416.20,229.58 416.45,229.60 416.70,229.62 416.95,229.65 417.20,229.67 417.45,229.70 417.70,229.72 417.96,229.74 418.21,229.77 418.46,229.79 418.71,229.81 418.96,229.84 419.21,229.86 419.46,229.88 419.71,229.91 419.96,229.93 420.21,229.95 420.46,229.97 420.72,230.00 420.97,230.02 421.22,230.04 421.47,230.07 421.72,230.09 421.97,230.11 422.22,230.13 422.47,230.16 422.72,230.18 422.97,230.20 423.22,230.22 423.47,230.25 423.73,230.27 423.98,230.29 424.23,230.31 424.48,230.34 424.73,230.36 424.98,230.38 425.23,230.40 425.48,230.43 425.73,230.45 425.98,230.47 426.23,230.49 426.49,230.51 426.74,230.54 426.99,230.56 427.24,230.58 427.49,230.60 427.74,230.62 427.99,230.64 428.24,230.67 428.49,230.69 428.74,230.71 428.99,230.73 429.25,230.75 429.50,230.77 429.75,230.80 430.00,230.82 430.25,230.84 430.50,230.86" fill="none" stroke="#ffff00" stroke-width="1.2" shape-rendering="crispEdges"/>
<path d="M80.4 309.1 L78.6 311.1 L78.2 315.1 L77.1 319.1 L76.2 321.4 L84.6 321.4 L83.7 319.1 L82.6 315.1 L82.2 311.1Z" fill="none" stroke="#ffff00" stroke-width="1.15"/>
<text x="80.3796992481203" y="332.59357" fill="#ffff00" font-family="Liberation Sans, sans-serif" font-size="12" text-anchor="middle" >1</text>
<path d="M87.4 269.3 L85.6 271.3 L85.2 275.3 L84.1 279.3 L83.2 281.6 L91.6 281.6 L90.7 279.3 L89.6 275.3 L89.2 271.3Z" fill="none" stroke="#ffff00" stroke-width="1.15"/>
<text x="87.4172932330827" y="292.76181999999994" fill="#ffff00" font-family="Liberation Sans, sans-serif" font-size="12" text-anchor="middle" >2</text>
<path d="M96.2 252.8 L94.4 254.8 L94.0 258.8 L92.9 262.8 L92.0 265.1 L100.4 265.1 L99.5 262.8 L98.4 258.8 L98.0 254.8Z" fill="none" stroke="#ffff00" stroke-width="1.15"/>
<text x="96.21428571428571" y="276.31208000000004" fill="#ffff00" font-family="Liberation Sans, sans-serif" font-size="12" text-anchor="middle" >3</text>
<path d="M122.6 232.9 L120.8 234.9 L120.4 238.9 L119.3 242.9 L118.4 245.2 L126.8 245.2 L125.9 242.9 L124.8 238.9 L124.4 234.9Z" fill="none" stroke="#ffff00" stroke-width="1.15"/>
<text x="122.60526315789474" y="256.419809" fill="#ffff00" font-family="Liberation Sans, sans-serif" font-size="12" text-anchor="middle" >4</text>
<path d="M166.6 219.0 L164.8 221.0 L164.4 225.0 L163.3 229.0 L162.4 231.3 L170.8 231.3 L169.9 229.0 L168.8 225.0 L168.4 221.0Z" fill="none" stroke="#ffff00" stroke-width="1.15"/>
<text x="166.59022556390977" y="242.450175" fill="#ffff00" font-family="Liberation Sans, sans-serif" font-size="12" text-anchor="middle" >5</text>
<path d="M254.6 213.4 L252.8 215.4 L252.4 219.4 L251.3 223.4 L250.4 225.7 L258.8 225.7 L257.9 223.4 L256.8 219.4 L256.4 215.4Z" fill="none" stroke="#ffff00" stroke-width="1.15"/>
<text x="254.56015037593983" y="236.946509" fill="#ffff00" font-family="Liberation Sans, sans-serif" font-size="12" text-anchor="middle" >6</text>
<path d="M430.5 230.9 L428.7 232.9 L428.3 236.9 L427.2 240.9 L426.3 243.2 L434.7 243.2 L433.8 240.9 L432.7 236.9 L432.3 232.9Z" fill="none" stroke="#ffff00" stroke-width="1.15"/>
<text x="430.5" y="254.358955" fill="#ffff00" font-family="Liberation Sans, sans-serif" font-size="12" text-anchor="middle" >7</text>
<path d="M229.5 213.0 L227.7 211.0 L227.3 207.0 L226.2 203.0 L225.3 200.7 L233.7 200.7 L232.8 203.0 L231.7 207.0 L231.3 211.0Z" fill="none" stroke="#ffff00" stroke-width="1.15"/>
<text x="229.51001756390977" y="198.45785" fill="#ffff00" font-family="Liberation Sans, sans-serif" font-size="12" text-anchor="middle" >8</text>
<path d="M80.4 353.5L73.2 361.3H87.6Z" fill="none" stroke="#ffff00" stroke-width="1.1"/>
<path d="M87.4 353.5L80.2 361.3H94.6Z" fill="none" stroke="#ffff00" stroke-width="1.1"/>
<path d="M96.2 353.5L89.0 361.3H103.4Z" fill="none" stroke="#ffff00" stroke-width="1.1"/>
<path d="M122.6 353.5L115.4 361.3H129.8Z" fill="none" stroke="#ffff00" stroke-width="1.1"/>
<path d="M166.6 353.5L159.4 361.3H173.8Z" fill="none" stroke="#ffff00" stroke-width="1.1"/>
<path d="M254.6 353.5L247.4 361.3H261.8Z" fill="none" stroke="#ffff00" stroke-width="1.1"/>
<path d="M430.5 353.5L423.3 361.3H437.7Z" fill="none" stroke="#ffff00" stroke-width="1.1"/>
<path d="M229.5 353.5L222.3 361.3H236.7Z" fill="#ffff00" stroke="#ffff00" stroke-width="1.1"/>
<text x="432.5" y="233.858955" fill="#ffff00" font-family="Liberation Sans, sans-serif" font-size="12" >1</text>
<rect x="552" y="72" width="1" height="281" fill="#484848"/>
<rect x="517" y="100" width="352" height="1" fill="#484848"/>
<rect x="587" y="72" width="1" height="281" fill="#484848"/>
<rect x="517" y="128" width="352" height="1" fill="#484848"/>
<rect x="622" y="72" width="1" height="281" fill="#484848"/>
<rect x="517" y="156" width="352" height="1" fill="#484848"/>
<rect x="657" y="72" width="1" height="281" fill="#484848"/>
<rect x="517" y="184" width="352" height="1" fill="#484848"/>
<rect x="693" y="72" width="1" height="281" fill="#484848"/>
<rect x="517" y="212" width="352" height="1" fill="#484848"/>
<rect x="728" y="72" width="1" height="281" fill="#484848"/>
<rect x="517" y="240" width="352" height="1" fill="#484848"/>
<rect x="763" y="72" width="1" height="281" fill="#484848"/>
<rect x="517" y="268" width="352" height="1" fill="#484848"/>
<rect x="798" y="72" width="1" height="281" fill="#484848"/>
<rect x="517" y="296" width="352" height="1" fill="#484848"/>
<rect x="833" y="72" width="1" height="281" fill="#484848"/>
<rect x="517" y="324" width="352" height="1" fill="#484848"/>
<rect x="517" y="72" width="353" height="1" fill="#a8a8a8"/>
<rect x="517" y="353" width="353" height="1" fill="#a8a8a8"/>
<rect x="517" y="72" width="1" height="282" fill="#a8a8a8"/>
<rect x="869" y="72" width="1" height="282" fill="#a8a8a8"/>
<text x="506.7" y="76" fill="#c8c8c8" font-family="Liberation Mono, monospace" font-size="12.6" letter-spacing="0.44" text-anchor="end" >50.00</text>
<text x="506.7" y="104" fill="#c8c8c8" font-family="Liberation Mono, monospace" font-size="12.6" letter-spacing="0.44" text-anchor="end" >40.00</text>
<text x="506.7" y="132" fill="#c8c8c8" font-family="Liberation Mono, monospace" font-size="12.6" letter-spacing="0.44" text-anchor="end" >30.00</text>
<text x="506.7" y="160" fill="#c8c8c8" font-family="Liberation Mono, monospace" font-size="12.6" letter-spacing="0.44" text-anchor="end" >20.00</text>
<text x="506.7" y="188" fill="#c8c8c8" font-family="Liberation Mono, monospace" font-size="12.6" letter-spacing="0.44" text-anchor="end" >10.00</text>
<text x="506.7" y="216" fill="#00ffff" font-family="Liberation Mono, monospace" font-size="12.6" letter-spacing="0.44" text-anchor="end" >0.000</text>
<text x="506.7" y="244" fill="#c8c8c8" font-family="Liberation Mono, monospace" font-size="12.6" letter-spacing="0.44" text-anchor="end" >-10.00</text>
<text x="506.7" y="272" fill="#c8c8c8" font-family="Liberation Mono, monospace" font-size="12.6" letter-spacing="0.44" text-anchor="end" >-20.00</text>
<text x="506.7" y="300" fill="#c8c8c8" font-family="Liberation Mono, monospace" font-size="12.6" letter-spacing="0.44" text-anchor="end" >-30.00</text>
<text x="506.7" y="328" fill="#c8c8c8" font-family="Liberation Mono, monospace" font-size="12.6" letter-spacing="0.44" text-anchor="end" >-40.00</text>
<text x="506.7" y="357" fill="#c8c8c8" font-family="Liberation Mono, monospace" font-size="12.6" letter-spacing="0.44" text-anchor="end" >-50.00</text>
<path d="M509 205.0L517 212.5L509 220.0Z" fill="#00ffff"/>
<path d="M878 205.0L870 212.5L878 220.0Z" fill="#00ffff"/>
<text x="528" y="83.8" fill="#00ffff" font-family="Liberation Mono, monospace" font-size="12.6" letter-spacing="0.44" >1</text>
<text x="552" y="83.8" fill="#00ffff" font-family="Liberation Mono, monospace" font-size="12.6" letter-spacing="0.44" >100.00000</text>
<text x="632" y="83.8" fill="#00ffff" font-family="Liberation Mono, monospace" font-size="12.6" letter-spacing="0.44" >MHz</text>
<text x="720.5" y="83.8" fill="#00ffff" font-family="Liberation Mono, monospace" font-size="12.6" letter-spacing="0.44" text-anchor="end" >-0.0164</text>
<text x="728" y="83.8" fill="#00ffff" font-family="Liberation Mono, monospace" font-size="12.6" letter-spacing="0.44" >dB</text>
<text x="528" y="96.75" fill="#00ffff" font-family="Liberation Mono, monospace" font-size="12.6" letter-spacing="0.44" >2</text>
<text x="552" y="96.75" fill="#00ffff" font-family="Liberation Mono, monospace" font-size="12.6" letter-spacing="0.44" >500.00000</text>
<text x="632" y="96.75" fill="#00ffff" font-family="Liberation Mono, monospace" font-size="12.6" letter-spacing="0.44" >MHz</text>
<text x="720.5" y="96.75" fill="#00ffff" font-family="Liberation Mono, monospace" font-size="12.6" letter-spacing="0.44" text-anchor="end" >-0.0702</text>
<text x="728" y="96.75" fill="#00ffff" font-family="Liberation Mono, monospace" font-size="12.6" letter-spacing="0.44" >dB</text>
<text x="528" y="109.69999999999999" fill="#00ffff" font-family="Liberation Mono, monospace" font-size="12.6" letter-spacing="0.44" >3</text>
<text x="552" y="109.69999999999999" fill="#00ffff" font-family="Liberation Mono, monospace" font-size="12.6" letter-spacing="0.44" >1.0000000</text>
<text x="632" y="109.69999999999999" fill="#00ffff" font-family="Liberation Mono, monospace" font-size="12.6" letter-spacing="0.44" >GHz</text>
<text x="720.5" y="109.69999999999999" fill="#00ffff" font-family="Liberation Mono, monospace" font-size="12.6" letter-spacing="0.44" text-anchor="end" >-0.2032</text>
<text x="728" y="109.69999999999999" fill="#00ffff" font-family="Liberation Mono, monospace" font-size="12.6" letter-spacing="0.44" >dB</text>
<text x="528" y="122.64999999999999" fill="#00ffff" font-family="Liberation Mono, monospace" font-size="12.6" letter-spacing="0.44" >4</text>
<text x="552" y="122.64999999999999" fill="#00ffff" font-family="Liberation Mono, monospace" font-size="12.6" letter-spacing="0.44" >2.5000000</text>
<text x="632" y="122.64999999999999" fill="#00ffff" font-family="Liberation Mono, monospace" font-size="12.6" letter-spacing="0.44" >GHz</text>
<text x="720.5" y="122.64999999999999" fill="#00ffff" font-family="Liberation Mono, monospace" font-size="12.6" letter-spacing="0.44" text-anchor="end" >-0.9958</text>
<text x="728" y="122.64999999999999" fill="#00ffff" font-family="Liberation Mono, monospace" font-size="12.6" letter-spacing="0.44" >dB</text>
<text x="528" y="135.6" fill="#00ffff" font-family="Liberation Mono, monospace" font-size="12.6" letter-spacing="0.44" >5</text>
<text x="552" y="135.6" fill="#00ffff" font-family="Liberation Mono, monospace" font-size="12.6" letter-spacing="0.44" >5.0000000</text>
<text x="632" y="135.6" fill="#00ffff" font-family="Liberation Mono, monospace" font-size="12.6" letter-spacing="0.44" >GHz</text>
<text x="720.5" y="135.6" fill="#00ffff" font-family="Liberation Mono, monospace" font-size="12.6" letter-spacing="0.44" text-anchor="end" >-4.3414</text>
<text x="728" y="135.6" fill="#00ffff" font-family="Liberation Mono, monospace" font-size="12.6" letter-spacing="0.44" >dB</text>
<text x="528" y="148.55" fill="#00ffff" font-family="Liberation Mono, monospace" font-size="12.6" letter-spacing="0.44" >6</text>
<text x="552" y="148.55" fill="#00ffff" font-family="Liberation Mono, monospace" font-size="12.6" letter-spacing="0.44" >10.000000</text>
<text x="632" y="148.55" fill="#00ffff" font-family="Liberation Mono, monospace" font-size="12.6" letter-spacing="0.44" >GHz</text>
<text x="720.5" y="148.55" fill="#00ffff" font-family="Liberation Mono, monospace" font-size="12.6" letter-spacing="0.44" text-anchor="end" >-13.373</text>
<text x="728" y="148.55" fill="#00ffff" font-family="Liberation Mono, monospace" font-size="12.6" letter-spacing="0.44" >dB</text>
<text x="528" y="161.5" fill="#00ffff" font-family="Liberation Mono, monospace" font-size="12.6" letter-spacing="0.44" >7</text>
<text x="552" y="161.5" fill="#00ffff" font-family="Liberation Mono, monospace" font-size="12.6" letter-spacing="0.44" >20.000000</text>
<text x="632" y="161.5" fill="#00ffff" font-family="Liberation Mono, monospace" font-size="12.6" letter-spacing="0.44" >GHz</text>
<text x="720.5" y="161.5" fill="#00ffff" font-family="Liberation Mono, monospace" font-size="12.6" letter-spacing="0.44" text-anchor="end" >-1.0833</text>
<text x="728" y="161.5" fill="#00ffff" font-family="Liberation Mono, monospace" font-size="12.6" letter-spacing="0.44" >dB</text>
<text x="520" y="174.45" fill="#00ffff" font-family="Liberation Mono, monospace" font-size="12.6" letter-spacing="0.44" >&gt;8</text>
<text x="552" y="174.45" fill="#00ffff" font-family="Liberation Mono, monospace" font-size="12.6" letter-spacing="0.44" >8.5762104</text>
<text x="632" y="174.45" fill="#00ffff" font-family="Liberation Mono, monospace" font-size="12.6" letter-spacing="0.44" >GHz</text>
<text x="720.5" y="174.45" fill="#00ffff" font-family="Liberation Mono, monospace" font-size="12.6" letter-spacing="0.44" text-anchor="end" >-35.560</text>
<text x="728" y="174.45" fill="#00ffff" font-family="Liberation Mono, monospace" font-size="12.6" letter-spacing="0.44" >dB</text>
<polyline points="517.50,213.10 517.53,213.10 517.52,213.09 517.51,213.08 517.50,213.07 517.51,213.07 517.56,213.06 517.65,213.05 517.82,213.05 518.06,213.05 518.40,213.05 518.84,213.06 519.38,213.06 519.99,213.07 520.67,213.08 521.40,213.10 522.17,213.11 522.97,213.13 523.78,213.15 524.60,213.17 525.40,213.20 526.20,213.23 527.00,213.26 527.82,213.29 528.66,213.32 529.52,213.35 530.40,213.39 531.32,213.44 532.27,213.48 533.26,213.54 534.30,213.60 535.38,213.67 536.51,213.74 537.68,213.82 538.89,213.90 540.12,213.99 541.39,214.09 542.67,214.18 543.97,214.29 545.28,214.39 546.60,214.50 547.93,214.61 549.29,214.72 550.66,214.82 552.06,214.93 553.47,215.05 554.89,215.17 556.33,215.31 557.78,215.46 559.24,215.62 560.70,215.80 562.18,216.00 563.68,216.22 565.19,216.45 566.72,216.69 568.26,216.94 569.80,217.21 571.34,217.48 572.87,217.75 574.40,218.02 575.90,218.30 577.39,218.58 578.88,218.85 580.36,219.13 581.84,219.42 583.31,219.71 584.78,220.01 586.24,220.32 587.70,220.63 589.15,220.96 590.60,221.30 592.04,221.64 593.46,221.97 594.87,222.31 596.27,222.65 597.67,223.00 599.07,223.37 600.48,223.77 601.90,224.21 603.34,224.68 604.80,225.20 606.29,225.77 607.82,226.37 609.37,227.01 610.94,227.69 612.51,228.39 614.07,229.11 615.61,229.86 617.12,230.63 618.59,231.41 620.00,232.20 621.36,233.02 622.70,233.88 624.00,234.77 625.28,235.69 626.53,236.62 627.75,237.55 628.95,238.47 630.12,239.38 631.27,240.26 632.40,241.10 633.50,241.91 634.58,242.69 635.63,243.46 636.66,244.21 637.66,244.94 638.64,245.67 639.59,246.40 640.52,247.13 641.42,247.86 642.30,248.60 643.16,249.35 643.99,250.10 644.80,250.85 645.59,251.60 646.35,252.34 647.08,253.09 647.79,253.83 648.46,254.56 649.10,255.28 649.70,256.00 650.26,256.70 650.78,257.38 651.26,258.05 651.70,258.71 652.12,259.36 652.52,260.02 652.90,260.69 653.27,261.37 653.63,262.07 654.00,262.80 654.36,263.54 654.70,264.27 655.02,265.01 655.33,265.76 655.62,266.52 655.92,267.31 656.21,268.13 656.50,268.98 656.80,269.87 657.10,270.80 657.41,271.79 657.72,272.82 658.03,273.89 658.34,274.99 658.65,276.12 658.96,277.28 659.27,278.45 659.58,279.63 659.89,280.82 660.20,282.00 660.51,283.20 660.84,284.45 661.16,285.72 661.49,287.01 661.82,288.30 662.14,289.58 662.45,290.85 662.75,292.08 663.03,293.27 663.30,294.40 663.54,295.48 663.77,296.51 663.98,297.50 664.17,298.47 664.36,299.41 664.55,300.34 664.73,301.25 664.91,302.16 665.10,303.08 665.30,304.00 665.51,305.00 665.72,306.09 665.93,307.25 666.15,308.41 666.36,309.54 666.58,310.58 666.79,311.49 667.00,312.23 667.20,312.75 667.40,313.00 667.59,312.95 667.78,312.62 667.97,312.07 668.16,311.34 668.34,310.48 668.52,309.55 668.69,308.58 668.86,307.64 669.03,306.76 669.20,306.00 669.36,305.37 669.50,304.81 669.64,304.30 669.77,303.81 669.91,303.29 670.04,302.73 670.19,302.08 670.34,301.31 670.51,300.40 670.70,299.30 670.91,297.97 671.13,296.40 671.36,294.66 671.60,292.79 671.85,290.86 672.11,288.90 672.37,286.99 672.65,285.16 672.92,283.48 673.20,282.00 673.48,280.69 673.77,279.47 674.07,278.34 674.37,277.29 674.67,276.30 674.99,275.37 675.31,274.48 675.63,273.63 675.96,272.81 676.30,272.00 676.64,271.24 676.96,270.56 677.29,269.94 677.63,269.37 677.97,268.82 678.33,268.28 678.70,267.74 679.10,267.17 679.53,266.57 680.00,265.90 680.50,265.18 681.04,264.43 681.60,263.65 682.18,262.85 682.79,262.03 683.41,261.21 684.05,260.39 684.69,259.58 685.35,258.78 686.00,258.00 686.63,257.26 687.22,256.54 687.78,255.85 688.36,255.17 688.96,254.48 689.60,253.78 690.32,253.05 691.12,252.29 692.04,251.48 693.10,250.60 694.30,249.65 695.61,248.61 697.04,247.52 698.55,246.40 700.14,245.24 701.78,244.09 703.46,242.95 705.17,241.84 706.89,240.79 708.60,239.80 710.33,238.87 712.11,237.97 713.93,237.09 715.78,236.25 717.66,235.43 719.55,234.63 721.45,233.86 723.35,233.12 725.23,232.40 727.10,231.70 728.96,231.03 730.82,230.39 732.68,229.77 734.54,229.18 736.40,228.61 738.26,228.07 740.12,227.55 741.98,227.05 743.84,226.56 745.70,226.10 747.55,225.66 749.40,225.24 751.25,224.85 753.10,224.49 754.95,224.14 756.80,223.81 758.65,223.49 760.50,223.18 762.35,222.89 764.20,222.60 766.06,222.32 767.92,222.06 769.78,221.82 771.64,221.59 773.50,221.37 775.36,221.16 777.22,220.96 779.08,220.77 780.94,220.58 782.80,220.40 784.65,220.23 786.50,220.06 788.35,219.91 790.20,219.76 792.05,219.62 793.90,219.49 795.75,219.37 797.60,219.24 799.45,219.12 801.30,219.00 803.16,218.88 805.02,218.77 806.88,218.66 808.74,218.56 810.60,218.46 812.46,218.37 814.32,218.27 816.18,218.18 818.04,218.09 819.90,218.00 821.70,217.91 823.40,217.83 825.06,217.76 826.70,217.68 828.37,217.61 830.10,217.54 831.93,217.46 833.90,217.38 836.04,217.30 838.40,217.20 841.14,217.09 844.31,216.97 847.78,216.83 851.43,216.69 855.11,216.55 858.69,216.41 862.06,216.28 865.07,216.17 867.59,216.07 869.50,216.00" fill="none" stroke="#00ffff" stroke-width="1.2" shape-rendering="crispEdges"/>
<path d="M518.4 213.0 L516.6 215.0 L516.2 219.0 L515.1 223.0 L514.2 225.3 L522.6 225.3 L521.7 223.0 L520.6 219.0 L520.2 215.0Z" fill="none" stroke="#00ffff" stroke-width="1.15"/>
<text x="518.3822055137845" y="236.54608399999998" fill="#00ffff" font-family="Liberation Sans, sans-serif" font-size="12" text-anchor="middle" >1</text>
<path d="M525.4 213.2 L523.6 215.2 L523.2 219.2 L522.1 223.2 L521.2 225.5 L529.6 225.5 L528.7 223.2 L527.6 219.2 L527.2 215.2Z" fill="none" stroke="#00ffff" stroke-width="1.15"/>
<text x="525.4398496240601" y="236.697262" fill="#00ffff" font-family="Liberation Sans, sans-serif" font-size="12" text-anchor="middle" >2</text>
<path d="M534.3 213.6 L532.5 215.6 L532.1 219.6 L531.0 223.6 L530.1 225.9 L538.5 225.9 L537.6 223.6 L536.5 219.6 L536.1 215.6Z" fill="none" stroke="#00ffff" stroke-width="1.15"/>
<text x="534.2619047619048" y="237.07099200000002" fill="#00ffff" font-family="Liberation Sans, sans-serif" font-size="12" text-anchor="middle" >3</text>
<path d="M560.7 215.8 L558.9 217.8 L558.5 221.8 L557.4 225.8 L556.5 228.1 L564.9 228.1 L564.0 225.8 L562.9 221.8 L562.5 217.8Z" fill="none" stroke="#00ffff" stroke-width="1.15"/>
<text x="560.7280701754386" y="239.298198" fill="#00ffff" font-family="Liberation Sans, sans-serif" font-size="12" text-anchor="middle" >4</text>
<path d="M604.8 225.2 L603.0 227.2 L602.6 231.2 L601.5 235.2 L600.6 237.5 L609.0 237.5 L608.1 235.2 L607.0 231.2 L606.6 227.2Z" fill="none" stroke="#00ffff" stroke-width="1.15"/>
<text x="604.8383458646616" y="248.699334" fill="#00ffff" font-family="Liberation Sans, sans-serif" font-size="12" text-anchor="middle" >5</text>
<path d="M693.1 250.6 L691.3 252.6 L690.9 256.6 L689.8 260.6 L688.9 262.9 L697.3 262.9 L696.4 260.6 L695.3 256.6 L694.9 252.6Z" fill="none" stroke="#00ffff" stroke-width="1.15"/>
<text x="693.0588972431078" y="274.07813" fill="#00ffff" font-family="Liberation Sans, sans-serif" font-size="12" text-anchor="middle" >6</text>
<path d="M869.5 216.0 L867.7 218.0 L867.3 222.0 L866.2 226.0 L865.3 228.3 L873.7 228.3 L872.8 226.0 L871.7 222.0 L871.3 218.0Z" fill="none" stroke="#00ffff" stroke-width="1.15"/>
<text x="869.5" y="239.544073" fill="#00ffff" font-family="Liberation Sans, sans-serif" font-size="12" text-anchor="middle" >7</text>
<path d="M667.9 312.9 L666.1 310.9 L665.7 306.9 L664.6 302.9 L663.7 300.6 L672.1 300.6 L671.2 302.9 L670.1 306.9 L669.7 310.9Z" fill="none" stroke="#00ffff" stroke-width="1.15"/>
<text x="667.9373965313283" y="298.42359999999996" fill="#00ffff" font-family="Liberation Sans, sans-serif" font-size="12" text-anchor="middle" >8</text>
<path d="M518.4 353.5L511.2 361.3H525.6Z" fill="none" stroke="#00ffff" stroke-width="1.1"/>
<path d="M525.4 353.5L518.2 361.3H532.6Z" fill="none" stroke="#00ffff" stroke-width="1.1"/>
<path d="M534.3 353.5L527.1 361.3H541.5Z" fill="none" stroke="#00ffff" stroke-width="1.1"/>
<path d="M560.7 353.5L553.5 361.3H567.9Z" fill="none" stroke="#00ffff" stroke-width="1.1"/>
<path d="M604.8 353.5L597.6 361.3H612.0Z" fill="none" stroke="#00ffff" stroke-width="1.1"/>
<path d="M693.1 353.5L685.9 361.3H700.3Z" fill="none" stroke="#00ffff" stroke-width="1.1"/>
<path d="M869.5 353.5L862.3 361.3H876.7Z" fill="none" stroke="#00ffff" stroke-width="1.1"/>
<path d="M667.9 353.5L660.7 361.3H675.1Z" fill="#00ffff" stroke="#00ffff" stroke-width="1.1"/>
<rect x="552" y="390" width="1" height="282" fill="#484848"/>
<rect x="517" y="418" width="352" height="1" fill="#484848"/>
<rect x="587" y="390" width="1" height="282" fill="#484848"/>
<rect x="517" y="446" width="352" height="1" fill="#484848"/>
<rect x="622" y="390" width="1" height="282" fill="#484848"/>
<rect x="517" y="474" width="352" height="1" fill="#484848"/>
<rect x="657" y="390" width="1" height="282" fill="#484848"/>
<rect x="517" y="502" width="352" height="1" fill="#484848"/>
<rect x="693" y="390" width="1" height="282" fill="#484848"/>
<rect x="517" y="531" width="352" height="1" fill="#484848"/>
<rect x="728" y="390" width="1" height="282" fill="#484848"/>
<rect x="517" y="559" width="352" height="1" fill="#484848"/>
<rect x="763" y="390" width="1" height="282" fill="#484848"/>
<rect x="517" y="587" width="352" height="1" fill="#484848"/>
<rect x="798" y="390" width="1" height="282" fill="#484848"/>
<rect x="517" y="615" width="352" height="1" fill="#484848"/>
<rect x="833" y="390" width="1" height="282" fill="#484848"/>
<rect x="517" y="643" width="352" height="1" fill="#484848"/>
<rect x="517" y="390" width="353" height="1" fill="#a8a8a8"/>
<rect x="517" y="672" width="353" height="1" fill="#a8a8a8"/>
<rect x="517" y="390" width="1" height="283" fill="#a8a8a8"/>
<rect x="869" y="390" width="1" height="283" fill="#a8a8a8"/>
<text x="506.7" y="394" fill="#c8c8c8" font-family="Liberation Mono, monospace" font-size="12.6" letter-spacing="0.44" text-anchor="end" >1.000</text>
<text x="506.7" y="422" fill="#c8c8c8" font-family="Liberation Mono, monospace" font-size="12.6" letter-spacing="0.44" text-anchor="end" >900.0m</text>
<text x="506.7" y="450" fill="#c8c8c8" font-family="Liberation Mono, monospace" font-size="12.6" letter-spacing="0.44" text-anchor="end" >800.0m</text>
<text x="506.7" y="478" fill="#c8c8c8" font-family="Liberation Mono, monospace" font-size="12.6" letter-spacing="0.44" text-anchor="end" >700.0m</text>
<text x="506.7" y="506" fill="#c8c8c8" font-family="Liberation Mono, monospace" font-size="12.6" letter-spacing="0.44" text-anchor="end" >600.0m</text>
<text x="506.7" y="535" fill="#c8c8c8" font-family="Liberation Mono, monospace" font-size="12.6" letter-spacing="0.44" text-anchor="end" >500.0m</text>
<text x="506.7" y="563" fill="#c8c8c8" font-family="Liberation Mono, monospace" font-size="12.6" letter-spacing="0.44" text-anchor="end" >400.0m</text>
<text x="506.7" y="591" fill="#c8c8c8" font-family="Liberation Mono, monospace" font-size="12.6" letter-spacing="0.44" text-anchor="end" >300.0m</text>
<text x="506.7" y="619" fill="#c8c8c8" font-family="Liberation Mono, monospace" font-size="12.6" letter-spacing="0.44" text-anchor="end" >200.0m</text>
<text x="506.7" y="647" fill="#c8c8c8" font-family="Liberation Mono, monospace" font-size="12.6" letter-spacing="0.44" text-anchor="end" >100.0m</text>
<text x="506.7" y="676" fill="#00ff00" font-family="Liberation Mono, monospace" font-size="12.6" letter-spacing="0.44" text-anchor="end" >0.000</text>
<path d="M509 664.5L517 672L509 679.5Z" fill="#00ff00"/>
<path d="M878 664.5L870 672L878 679.5Z" fill="#00ff00"/>
<text x="528" y="401.8" fill="#00ff00" font-family="Liberation Mono, monospace" font-size="12.6" letter-spacing="0.44" >1</text>
<text x="552" y="401.8" fill="#00ff00" font-family="Liberation Mono, monospace" font-size="12.6" letter-spacing="0.44" >100.00000</text>
<text x="632" y="401.8" fill="#00ff00" font-family="Liberation Mono, monospace" font-size="12.6" letter-spacing="0.44" >MHz</text>
<text x="720.5" y="401.8" fill="#00ff00" font-family="Liberation Mono, monospace" font-size="12.6" letter-spacing="0.44" text-anchor="end" >2.7870</text>
<text x="728" y="401.8" fill="#00ff00" font-family="Liberation Mono, monospace" font-size="12.6" letter-spacing="0.44" >nU</text>
<text x="528" y="414.75" fill="#00ff00" font-family="Liberation Mono, monospace" font-size="12.6" letter-spacing="0.44" >2</text>
<text x="552" y="414.75" fill="#00ff00" font-family="Liberation Mono, monospace" font-size="12.6" letter-spacing="0.44" >500.00000</text>
<text x="632" y="414.75" fill="#00ff00" font-family="Liberation Mono, monospace" font-size="12.6" letter-spacing="0.44" >MHz</text>
<text x="720.5" y="414.75" fill="#00ff00" font-family="Liberation Mono, monospace" font-size="12.6" letter-spacing="0.44" text-anchor="end" >2.6789</text>
<text x="728" y="414.75" fill="#00ff00" font-family="Liberation Mono, monospace" font-size="12.6" letter-spacing="0.44" >nU</text>
<text x="528" y="427.7" fill="#00ff00" font-family="Liberation Mono, monospace" font-size="12.6" letter-spacing="0.44" >3</text>
<text x="552" y="427.7" fill="#00ff00" font-family="Liberation Mono, monospace" font-size="12.6" letter-spacing="0.44" >1.0000000</text>
<text x="632" y="427.7" fill="#00ff00" font-family="Liberation Mono, monospace" font-size="12.6" letter-spacing="0.44" >GHz</text>
<text x="720.5" y="427.7" fill="#00ff00" font-family="Liberation Mono, monospace" font-size="12.6" letter-spacing="0.44" text-anchor="end" >2.6973</text>
<text x="728" y="427.7" fill="#00ff00" font-family="Liberation Mono, monospace" font-size="12.6" letter-spacing="0.44" >nU</text>
<text x="528" y="440.65" fill="#00ff00" font-family="Liberation Mono, monospace" font-size="12.6" letter-spacing="0.44" >4</text>
<text x="552" y="440.65" fill="#00ff00" font-family="Liberation Mono, monospace" font-size="12.6" letter-spacing="0.44" >2.5000000</text>
<text x="632" y="440.65" fill="#00ff00" font-family="Liberation Mono, monospace" font-size="12.6" letter-spacing="0.44" >GHz</text>
<text x="720.5" y="440.65" fill="#00ff00" font-family="Liberation Mono, monospace" font-size="12.6" letter-spacing="0.44" text-anchor="end" >2.9478</text>
<text x="728" y="440.65" fill="#00ff00" font-family="Liberation Mono, monospace" font-size="12.6" letter-spacing="0.44" >nU</text>
<text x="528" y="453.6" fill="#00ff00" font-family="Liberation Mono, monospace" font-size="12.6" letter-spacing="0.44" >5</text>
<text x="552" y="453.6" fill="#00ff00" font-family="Liberation Mono, monospace" font-size="12.6" letter-spacing="0.44" >5.0000000</text>
<text x="632" y="453.6" fill="#00ff00" font-family="Liberation Mono, monospace" font-size="12.6" letter-spacing="0.44" >GHz</text>
<text x="720.5" y="453.6" fill="#00ff00" font-family="Liberation Mono, monospace" font-size="12.6" letter-spacing="0.44" text-anchor="end" >4.3150</text>
<text x="728" y="453.6" fill="#00ff00" font-family="Liberation Mono, monospace" font-size="12.6" letter-spacing="0.44" >nU</text>
<text x="528" y="466.55" fill="#00ff00" font-family="Liberation Mono, monospace" font-size="12.6" letter-spacing="0.44" >6</text>
<text x="552" y="466.55" fill="#00ff00" font-family="Liberation Mono, monospace" font-size="12.6" letter-spacing="0.44" >10.000000</text>
<text x="632" y="466.55" fill="#00ff00" font-family="Liberation Mono, monospace" font-size="12.6" letter-spacing="0.44" >GHz</text>
<text x="720.5" y="466.55" fill="#00ff00" font-family="Liberation Mono, monospace" font-size="12.6" letter-spacing="0.44" text-anchor="end" >6.8960</text>
<text x="728" y="466.55" fill="#00ff00" font-family="Liberation Mono, monospace" font-size="12.6" letter-spacing="0.44" >nU</text>
<text x="528" y="479.5" fill="#00ff00" font-family="Liberation Mono, monospace" font-size="12.6" letter-spacing="0.44" >7</text>
<text x="552" y="479.5" fill="#00ff00" font-family="Liberation Mono, monospace" font-size="12.6" letter-spacing="0.44" >20.000000</text>
<text x="632" y="479.5" fill="#00ff00" font-family="Liberation Mono, monospace" font-size="12.6" letter-spacing="0.44" >GHz</text>
<text x="720.5" y="479.5" fill="#00ff00" font-family="Liberation Mono, monospace" font-size="12.6" letter-spacing="0.44" text-anchor="end" >135.71</text>
<text x="728" y="479.5" fill="#00ff00" font-family="Liberation Mono, monospace" font-size="12.6" letter-spacing="0.44" >pU</text>
<text x="520" y="492.45" fill="#00ff00" font-family="Liberation Mono, monospace" font-size="12.6" letter-spacing="0.44" >&gt;8</text>
<text x="552" y="492.45" fill="#00ff00" font-family="Liberation Mono, monospace" font-size="12.6" letter-spacing="0.44" >8.5762104</text>
<text x="632" y="492.45" fill="#00ff00" font-family="Liberation Mono, monospace" font-size="12.6" letter-spacing="0.44" >GHz</text>
<text x="720.5" y="492.45" fill="#00ff00" font-family="Liberation Mono, monospace" font-size="12.6" letter-spacing="0.44" text-anchor="end" >6.5019</text>
<text x="728" y="492.45" fill="#00ff00" font-family="Liberation Mono, monospace" font-size="12.6" letter-spacing="0.44" >nU</text>
<path d="M517 672.5H870" stroke="#00ff00" stroke-width="1.15"/>
<path d="M518.4 672.5 L516.6 674.5 L516.2 678.5 L515.1 682.5 L514.2 684.8 L522.6 684.8 L521.7 682.5 L520.6 678.5 L520.2 674.5Z" fill="none" stroke="#00ff00" stroke-width="1.15"/>
<text x="518.3822055137845" y="696.0" fill="#00ff00" font-family="Liberation Sans, sans-serif" font-size="12" text-anchor="middle" >1</text>
<path d="M525.4 672.5 L523.6 674.5 L523.2 678.5 L522.1 682.5 L521.2 684.8 L529.6 684.8 L528.7 682.5 L527.6 678.5 L527.2 674.5Z" fill="none" stroke="#00ff00" stroke-width="1.15"/>
<text x="525.4398496240601" y="696.0" fill="#00ff00" font-family="Liberation Sans, sans-serif" font-size="12" text-anchor="middle" >2</text>
<path d="M534.3 672.5 L532.5 674.5 L532.1 678.5 L531.0 682.5 L530.1 684.8 L538.5 684.8 L537.6 682.5 L536.5 678.5 L536.1 674.5Z" fill="none" stroke="#00ff00" stroke-width="1.15"/>
<text x="534.2619047619048" y="696.0" fill="#00ff00" font-family="Liberation Sans, sans-serif" font-size="12" text-anchor="middle" >3</text>
<path d="M560.7 672.5 L558.9 674.5 L558.5 678.5 L557.4 682.5 L556.5 684.8 L564.9 684.8 L564.0 682.5 L562.9 678.5 L562.5 674.5Z" fill="none" stroke="#00ff00" stroke-width="1.15"/>
<text x="560.7280701754386" y="696.0" fill="#00ff00" font-family="Liberation Sans, sans-serif" font-size="12" text-anchor="middle" >4</text>
<path d="M604.8 672.5 L603.0 674.5 L602.6 678.5 L601.5 682.5 L600.6 684.8 L609.0 684.8 L608.1 682.5 L607.0 678.5 L606.6 674.5Z" fill="none" stroke="#00ff00" stroke-width="1.15"/>
<text x="604.8383458646616" y="696.0" fill="#00ff00" font-family="Liberation Sans, sans-serif" font-size="12" text-anchor="middle" >5</text>
<path d="M693.1 672.5 L691.3 674.5 L690.9 678.5 L689.8 682.5 L688.9 684.8 L697.3 684.8 L696.4 682.5 L695.3 678.5 L694.9 674.5Z" fill="none" stroke="#00ff00" stroke-width="1.15"/>
<text x="693.0588972431078" y="696.0" fill="#00ff00" font-family="Liberation Sans, sans-serif" font-size="12" text-anchor="middle" >6</text>
<path d="M869.5 672.5 L867.7 674.5 L867.3 678.5 L866.2 682.5 L865.3 684.8 L873.7 684.8 L872.8 682.5 L871.7 678.5 L871.3 674.5Z" fill="none" stroke="#00ff00" stroke-width="1.15"/>
<text x="869.5" y="696.0" fill="#00ff00" font-family="Liberation Sans, sans-serif" font-size="12" text-anchor="middle" >7</text>
<path d="M667.9 672.5 L666.1 670.5 L665.7 666.5 L664.6 662.5 L663.7 660.2 L672.1 660.2 L671.2 662.5 L670.1 666.5 L669.7 670.5Z" fill="none" stroke="#00ff00" stroke-width="1.15"/>
<text x="667.9373965313283" y="658.0" fill="#00ff00" font-family="Liberation Sans, sans-serif" font-size="12" text-anchor="middle" >8</text>
<path d="M518.4 672.5L511.2 680.3H525.6Z" fill="none" stroke="#00ff00" stroke-width="1.1"/>
<path d="M525.4 672.5L518.2 680.3H532.6Z" fill="none" stroke="#00ff00" stroke-width="1.1"/>
<path d="M534.3 672.5L527.1 680.3H541.5Z" fill="none" stroke="#00ff00" stroke-width="1.1"/>
<path d="M560.7 672.5L553.5 680.3H567.9Z" fill="none" stroke="#00ff00" stroke-width="1.1"/>
<path d="M604.8 672.5L597.6 680.3H612.0Z" fill="none" stroke="#00ff00" stroke-width="1.1"/>
<path d="M693.1 672.5L685.9 680.3H700.3Z" fill="none" stroke="#00ff00" stroke-width="1.1"/>
<path d="M869.5 672.5L862.3 680.3H876.7Z" fill="none" stroke="#00ff00" stroke-width="1.1"/>
<path d="M667.9 672.5L660.7 680.3H675.1Z" fill="#00ff00" stroke="#00ff00" stroke-width="1.1"/>
<clipPath id="sc"><circle cx="221.5" cy="531.0" r="141.5"/></clipPath>
<g clip-path="url(#sc)" fill="none" stroke="#5c5c5c" stroke-width="1" shape-rendering="crispEdges">
<circle cx="245.08" cy="531.0" r="117.92"/>
<circle cx="268.67" cy="531.0" r="94.33"/>
<circle cx="292.25" cy="531.0" r="70.75"/>
<circle cx="315.83" cy="531.0" r="47.17"/>
<circle cx="339.42" cy="531.0" r="23.58"/>
<circle cx="363.00" cy="493.09" r="37.91"/>
<circle cx="363.00" cy="568.91" r="37.91"/>
<circle cx="363.00" cy="449.30" r="81.70"/>
<circle cx="363.00" cy="612.70" r="81.70"/>
<circle cx="363.00" cy="389.50" r="141.50"/>
<circle cx="363.00" cy="672.50" r="141.50"/>
<circle cx="363.00" cy="285.91" r="245.09"/>
<circle cx="363.00" cy="776.09" r="245.09"/>
<circle cx="363.00" cy="2.91" r="528.09"/>
<circle cx="363.00" cy="1059.09" r="528.09"/>
</g>
<circle cx="221.5" cy="531.0" r="141.5" fill="none" stroke="#aaaaaa" stroke-width="1" shape-rendering="crispEdges"/>
<path d="M80.0 531.5H363.0" stroke="#b4b4b4" stroke-width="1"/>
<text x="27.5" y="402.0" fill="#ff00ff" font-family="Liberation Mono, monospace" font-size="12.6" letter-spacing="0.44" >1</text>
<text x="51.5" y="402.0" fill="#ff00ff" font-family="Liberation Mono, monospace" font-size="12.6" letter-spacing="0.44" >100.00000</text>
<text x="131.5" y="402.0" fill="#ff00ff" font-family="Liberation Mono, monospace" font-size="12.6" letter-spacing="0.44" >MHz</text>
<text x="218.5" y="402.0" fill="#ff00ff" font-family="Liberation Mono, monospace" font-size="12.6" letter-spacing="0.44" text-anchor="end" >50.164</text>
<text x="227" y="402.0" fill="#ff00ff" font-family="Liberation Mono, monospace" font-size="12.6" letter-spacing="0.44" >Ω</text>
<text x="299" y="402.0" fill="#ff00ff" font-family="Liberation Mono, monospace" font-size="12.6" letter-spacing="0.44" text-anchor="end" >2.1143</text>
<text x="307.5" y="402.0" fill="#ff00ff" font-family="Liberation Mono, monospace" font-size="12.6" letter-spacing="0.44" >Ω</text>
<text x="379.5" y="402.0" fill="#ff00ff" font-family="Liberation Mono, monospace" font-size="12.6" letter-spacing="0.44" text-anchor="end" >3.3650</text>
<text x="387" y="402.0" fill="#ff00ff" font-family="Liberation Mono, monospace" font-size="12.6" letter-spacing="0.44" >nH</text>
<text x="27.5" y="414.95" fill="#ff00ff" font-family="Liberation Mono, monospace" font-size="12.6" letter-spacing="0.44" >2</text>
<text x="51.5" y="414.95" fill="#ff00ff" font-family="Liberation Mono, monospace" font-size="12.6" letter-spacing="0.44" >500.00000</text>
<text x="131.5" y="414.95" fill="#ff00ff" font-family="Liberation Mono, monospace" font-size="12.6" letter-spacing="0.44" >MHz</text>
<text x="218.5" y="414.95" fill="#ff00ff" font-family="Liberation Mono, monospace" font-size="12.6" letter-spacing="0.44" text-anchor="end" >50.184</text>
<text x="227" y="414.95" fill="#ff00ff" font-family="Liberation Mono, monospace" font-size="12.6" letter-spacing="0.44" >Ω</text>
<text x="299" y="414.95" fill="#ff00ff" font-family="Liberation Mono, monospace" font-size="12.6" letter-spacing="0.44" text-anchor="end" >10.201</text>
<text x="307.5" y="414.95" fill="#ff00ff" font-family="Liberation Mono, monospace" font-size="12.6" letter-spacing="0.44" >Ω</text>
<text x="379.5" y="414.95" fill="#ff00ff" font-family="Liberation Mono, monospace" font-size="12.6" letter-spacing="0.44" text-anchor="end" >3.2470</text>
<text x="387" y="414.95" fill="#ff00ff" font-family="Liberation Mono, monospace" font-size="12.6" letter-spacing="0.44" >nH</text>
<text x="27.5" y="427.9" fill="#ff00ff" font-family="Liberation Mono, monospace" font-size="12.6" letter-spacing="0.44" >3</text>
<text x="51.5" y="427.9" fill="#ff00ff" font-family="Liberation Mono, monospace" font-size="12.6" letter-spacing="0.44" >1.0000000</text>
<text x="131.5" y="427.9" fill="#ff00ff" font-family="Liberation Mono, monospace" font-size="12.6" letter-spacing="0.44" >GHz</text>
<text x="218.5" y="427.9" fill="#ff00ff" font-family="Liberation Mono, monospace" font-size="12.6" letter-spacing="0.44" text-anchor="end" >49.932</text>
<text x="227" y="427.9" fill="#ff00ff" font-family="Liberation Mono, monospace" font-size="12.6" letter-spacing="0.44" >Ω</text>
<text x="299" y="427.9" fill="#ff00ff" font-family="Liberation Mono, monospace" font-size="12.6" letter-spacing="0.44" text-anchor="end" >20.036</text>
<text x="307.5" y="427.9" fill="#ff00ff" font-family="Liberation Mono, monospace" font-size="12.6" letter-spacing="0.44" >Ω</text>
<text x="379.5" y="427.9" fill="#ff00ff" font-family="Liberation Mono, monospace" font-size="12.6" letter-spacing="0.44" text-anchor="end" >3.1888</text>
<text x="387" y="427.9" fill="#ff00ff" font-family="Liberation Mono, monospace" font-size="12.6" letter-spacing="0.44" >nH</text>
<text x="27.5" y="440.85" fill="#ff00ff" font-family="Liberation Mono, monospace" font-size="12.6" letter-spacing="0.44" >4</text>
<text x="51.5" y="440.85" fill="#ff00ff" font-family="Liberation Mono, monospace" font-size="12.6" letter-spacing="0.44" >2.5000000</text>
<text x="131.5" y="440.85" fill="#ff00ff" font-family="Liberation Mono, monospace" font-size="12.6" letter-spacing="0.44" >GHz</text>
<text x="218.5" y="440.85" fill="#ff00ff" font-family="Liberation Mono, monospace" font-size="12.6" letter-spacing="0.44" text-anchor="end" >49.514</text>
<text x="227" y="440.85" fill="#ff00ff" font-family="Liberation Mono, monospace" font-size="12.6" letter-spacing="0.44" >Ω</text>
<text x="299" y="440.85" fill="#ff00ff" font-family="Liberation Mono, monospace" font-size="12.6" letter-spacing="0.44" text-anchor="end" >49.089</text>
<text x="307.5" y="440.85" fill="#ff00ff" font-family="Liberation Mono, monospace" font-size="12.6" letter-spacing="0.44" >Ω</text>
<text x="379.5" y="440.85" fill="#ff00ff" font-family="Liberation Mono, monospace" font-size="12.6" letter-spacing="0.44" text-anchor="end" >3.1251</text>
<text x="387" y="440.85" fill="#ff00ff" font-family="Liberation Mono, monospace" font-size="12.6" letter-spacing="0.44" >nH</text>
<text x="27.5" y="453.8" fill="#ff00ff" font-family="Liberation Mono, monospace" font-size="12.6" letter-spacing="0.44" >5</text>
<text x="51.5" y="453.8" fill="#ff00ff" font-family="Liberation Mono, monospace" font-size="12.6" letter-spacing="0.44" >5.0000000</text>
<text x="131.5" y="453.8" fill="#ff00ff" font-family="Liberation Mono, monospace" font-size="12.6" letter-spacing="0.44" >GHz</text>
<text x="218.5" y="453.8" fill="#ff00ff" font-family="Liberation Mono, monospace" font-size="12.6" letter-spacing="0.44" text-anchor="end" >63.571</text>
<text x="227" y="453.8" fill="#ff00ff" font-family="Liberation Mono, monospace" font-size="12.6" letter-spacing="0.44" >Ω</text>
<text x="299" y="453.8" fill="#ff00ff" font-family="Liberation Mono, monospace" font-size="12.6" letter-spacing="0.44" text-anchor="end" >141.74</text>
<text x="307.5" y="453.8" fill="#ff00ff" font-family="Liberation Mono, monospace" font-size="12.6" letter-spacing="0.44" >Ω</text>
<text x="379.5" y="453.8" fill="#ff00ff" font-family="Liberation Mono, monospace" font-size="12.6" letter-spacing="0.44" text-anchor="end" >4.5117</text>
<text x="387" y="453.8" fill="#ff00ff" font-family="Liberation Mono, monospace" font-size="12.6" letter-spacing="0.44" >nH</text>
<text x="27.5" y="466.75" fill="#ff00ff" font-family="Liberation Mono, monospace" font-size="12.6" letter-spacing="0.44" >6</text>
<text x="51.5" y="466.75" fill="#ff00ff" font-family="Liberation Mono, monospace" font-size="12.6" letter-spacing="0.44" >10.000000</text>
<text x="131.5" y="466.75" fill="#ff00ff" font-family="Liberation Mono, monospace" font-size="12.6" letter-spacing="0.44" >GHz</text>
<text x="218.5" y="466.75" fill="#ff00ff" font-family="Liberation Mono, monospace" font-size="12.6" letter-spacing="0.44" text-anchor="end" >13.557</text>
<text x="227" y="466.75" fill="#ff00ff" font-family="Liberation Mono, monospace" font-size="12.6" letter-spacing="0.44" >Ω</text>
<text x="299" y="466.75" fill="#ff00ff" font-family="Liberation Mono, monospace" font-size="12.6" letter-spacing="0.44" text-anchor="end" >-274.75</text>
<text x="307.5" y="466.75" fill="#ff00ff" font-family="Liberation Mono, monospace" font-size="12.6" letter-spacing="0.44" >Ω</text>
<text x="379.5" y="466.75" fill="#ff00ff" font-family="Liberation Mono, monospace" font-size="12.6" letter-spacing="0.44" text-anchor="end" >57.926</text>
<text x="387" y="466.75" fill="#ff00ff" font-family="Liberation Mono, monospace" font-size="12.6" letter-spacing="0.44" >fF</text>
<text x="27.5" y="479.7" fill="#ff00ff" font-family="Liberation Mono, monospace" font-size="12.6" letter-spacing="0.44" >7</text>
<text x="51.5" y="479.7" fill="#ff00ff" font-family="Liberation Mono, monospace" font-size="12.6" letter-spacing="0.44" >20.000000</text>
<text x="131.5" y="479.7" fill="#ff00ff" font-family="Liberation Mono, monospace" font-size="12.6" letter-spacing="0.44" >GHz</text>
<text x="218.5" y="479.7" fill="#ff00ff" font-family="Liberation Mono, monospace" font-size="12.6" letter-spacing="0.44" text-anchor="end" >33.501</text>
<text x="227" y="479.7" fill="#ff00ff" font-family="Liberation Mono, monospace" font-size="12.6" letter-spacing="0.44" >Ω</text>
<text x="299" y="479.7" fill="#ff00ff" font-family="Liberation Mono, monospace" font-size="12.6" letter-spacing="0.44" text-anchor="end" >-41.780</text>
<text x="307.5" y="479.7" fill="#ff00ff" font-family="Liberation Mono, monospace" font-size="12.6" letter-spacing="0.44" >Ω</text>
<text x="379.5" y="479.7" fill="#ff00ff" font-family="Liberation Mono, monospace" font-size="12.6" letter-spacing="0.44" text-anchor="end" >190.47</text>
<text x="387" y="479.7" fill="#ff00ff" font-family="Liberation Mono, monospace" font-size="12.6" letter-spacing="0.44" >fF</text>
<text x="19.5" y="492.65" fill="#ff00ff" font-family="Liberation Mono, monospace" font-size="12.6" letter-spacing="0.44" >&gt;8</text>
<text x="51.5" y="492.65" fill="#ff00ff" font-family="Liberation Mono, monospace" font-size="12.6" letter-spacing="0.44" >8.5762104</text>
<text x="131.5" y="492.65" fill="#ff00ff" font-family="Liberation Mono, monospace" font-size="12.6" letter-spacing="0.44" >GHz</text>
<text x="218.5" y="492.65" fill="#ff00ff" font-family="Liberation Mono, monospace" font-size="12.6" letter-spacing="0.44" text-anchor="end" >-7.4112</text>
<text x="227" y="492.65" fill="#ff00ff" font-family="Liberation Mono, monospace" font-size="12.6" letter-spacing="0.44" >Ω</text>
<text x="299" y="492.65" fill="#ff00ff" font-family="Liberation Mono, monospace" font-size="12.6" letter-spacing="0.44" text-anchor="end" >-709.75</text>
<text x="307.5" y="492.65" fill="#ff00ff" font-family="Liberation Mono, monospace" font-size="12.6" letter-spacing="0.44" >Ω</text>
<text x="379.5" y="492.65" fill="#ff00ff" font-family="Liberation Mono, monospace" font-size="12.6" letter-spacing="0.44" text-anchor="end" >26.147</text>
<text x="387" y="492.65" fill="#ff00ff" font-family="Liberation Mono, monospace" font-size="12.6" letter-spacing="0.44" >fF</text>
<polyline points="221.80,531.50 221.79,531.33 221.78,531.15 221.75,530.96 221.73,530.73 221.71,530.46 221.69,530.14 221.69,529.74 221.70,529.27 221.74,528.70 221.79,528.02 221.87,527.22 221.95,526.30 222.04,525.27 222.15,524.16 222.27,522.99 222.41,521.77 222.57,520.52 222.76,519.26 222.97,518.00 223.21,516.77 223.47,515.54 223.73,514.30 224.01,513.03 224.31,511.75 224.64,510.45 225.00,509.14 225.40,507.80 225.84,506.45 226.33,505.09 226.88,503.71 227.46,502.30 228.08,500.87 228.72,499.41 229.41,497.93 230.15,496.44 230.93,494.94 231.77,493.44 232.68,491.95 233.65,490.47 234.70,489.00 235.79,487.53 236.88,486.03 238.01,484.52 239.19,483.01 240.45,481.51 241.80,480.03 243.28,478.59 244.89,477.19 246.67,475.86 248.64,474.59 250.86,473.35 253.37,472.11 256.10,470.89 258.98,469.70 261.96,468.57 264.96,467.52 267.93,466.55 270.80,465.70 273.51,464.97 276.00,464.40 278.29,463.98 280.45,463.71 282.51,463.56 284.49,463.52 286.40,463.57 288.27,463.70 290.11,463.90 291.95,464.14 293.81,464.41 295.70,464.70 297.59,464.99 299.42,465.27 301.23,465.59 303.02,465.95 304.81,466.37 306.61,466.88 308.45,467.50 310.33,468.24 312.27,469.14 314.29,470.20 316.40,471.46 318.62,472.89 320.92,474.48 323.26,476.20 325.62,478.02 327.99,479.92 330.32,481.88 332.60,483.86 334.80,485.84 336.90,487.80 338.94,489.77 340.98,491.78 343.00,493.84 344.98,495.93 346.90,498.06 348.75,500.22 350.50,502.39 352.14,504.59 353.64,506.79 355.00,509.00 356.21,511.25 357.29,513.55 358.26,515.90 359.11,518.27 359.87,520.65 360.53,523.01 361.10,525.35 361.60,527.64 362.03,529.86 362.40,532.00 362.71,534.01 362.95,535.88 363.11,537.64 363.20,539.36 363.20,541.06 363.11,542.79 362.94,544.59 362.66,546.51 362.29,548.59 361.81,550.87 361.15,553.46 360.28,556.39 359.24,559.56 358.09,562.86 356.88,566.20 355.66,569.47 354.48,572.57 353.39,575.41 352.45,577.88 351.69,579.89 351.16,581.38 350.81,582.46 350.60,583.20 350.48,583.67 350.40,583.97 350.32,584.17 350.18,584.35 349.95,584.59 349.57,584.98 349.00,585.60 348.27,586.40 347.45,587.27 346.55,588.20 345.56,589.17 344.49,590.17 343.35,591.18 342.12,592.18 340.82,593.16 339.45,594.11 338.00,595.00 336.49,595.86 334.92,596.70 333.28,597.53 331.57,598.35 329.77,599.14 327.89,599.92 325.92,600.68 323.85,601.41 321.68,602.12 319.40,602.80 316.94,603.46 314.28,604.11 311.46,604.75 308.53,605.36 305.53,605.94 302.51,606.50 299.53,607.02 296.63,607.49 293.85,607.92 291.25,608.30 288.81,608.64 286.48,608.94 284.23,609.21 282.06,609.44 279.93,609.63 277.84,609.77 275.76,609.87 273.67,609.90 271.56,609.88 269.40,609.80 267.20,609.65 264.99,609.43 262.77,609.16 260.55,608.82 258.34,608.44 256.13,608.02 253.93,607.56 251.76,607.06 249.61,606.54 247.50,606.00 245.33,605.39 243.05,604.66 240.72,603.87 238.39,603.02 236.12,602.17 233.95,601.33 231.95,600.55 230.17,599.84 228.65,599.26 227.47,598.81" fill="none" stroke="#ff00ff" stroke-width="1.2" shape-rendering="crispEdges"/>
<path d="M221.8 528.0 L220.0 530.0 L219.6 534.0 L218.5 538.0 L217.6 540.3 L226.0 540.3 L225.1 538.0 L224.0 534.0 L223.6 530.0Z" fill="none" stroke="#ff00ff" stroke-width="1.15"/>
<text x="221.7945960612758" y="551.5193823574573" fill="#ff00ff" font-family="Liberation Sans, sans-serif" font-size="12" text-anchor="middle" >1</text>
<path d="M223.2 516.8 L221.4 518.8 L221.0 522.8 L219.9 526.8 L219.0 529.1 L227.4 529.1 L226.5 526.8 L225.4 522.8 L225.0 518.8Z" fill="none" stroke="#ff00ff" stroke-width="1.15"/>
<text x="223.20921192216707" y="540.2661320252538" fill="#ff00ff" font-family="Liberation Sans, sans-serif" font-size="12" text-anchor="middle" >2</text>
<path d="M226.9 503.7 L225.1 505.7 L224.7 509.7 L223.6 513.7 L222.7 516.0 L231.1 516.0 L230.2 513.7 L229.1 509.7 L228.7 505.7Z" fill="none" stroke="#ff00ff" stroke-width="1.15"/>
<text x="226.87574374033457" y="527.2075851737316" fill="#ff00ff" font-family="Liberation Sans, sans-serif" font-size="12" text-anchor="middle" >3</text>
<path d="M248.6 474.6 L246.8 476.6 L246.4 480.6 L245.3 484.6 L244.4 486.9 L252.8 486.9 L251.9 484.6 L250.8 480.6 L250.4 476.6Z" fill="none" stroke="#ff00ff" stroke-width="1.15"/>
<text x="248.63714387006576" y="498.08624671340374" fill="#ff00ff" font-family="Liberation Sans, sans-serif" font-size="12" text-anchor="middle" >4</text>
<path d="M314.3 470.2 L312.5 472.2 L312.1 476.2 L311.0 480.2 L310.1 482.5 L318.5 482.5 L317.6 480.2 L316.5 476.2 L316.1 472.2Z" fill="none" stroke="#ff00ff" stroke-width="1.15"/>
<text x="314.2853025745689" y="493.70260266194185" fill="#ff00ff" font-family="Liberation Sans, sans-serif" font-size="12" text-anchor="middle" >5</text>
<path d="M351.7 579.9 L349.9 581.9 L349.5 585.9 L348.4 589.9 L347.5 592.2 L355.9 592.2 L355.0 589.9 L353.9 585.9 L353.5 581.9Z" fill="none" stroke="#ff00ff" stroke-width="1.15"/>
<text x="351.69150186891204" y="603.385407768089" fill="#ff00ff" font-family="Liberation Sans, sans-serif" font-size="12" text-anchor="middle" >6</text>
<path d="M227.5 598.8 L225.7 600.8 L225.3 604.8 L224.2 608.8 L223.3 611.1 L231.7 611.1 L230.8 608.8 L229.7 604.8 L229.3 600.8Z" fill="none" stroke="#ff00ff" stroke-width="1.15"/>
<text x="227.47107953811542" y="622.312341132412" fill="#ff00ff" font-family="Liberation Sans, sans-serif" font-size="12" text-anchor="middle" >7</text>
<path d="M361.8 550.9 L360.0 548.9 L359.6 544.9 L358.5 540.9 L357.6 538.6 L366.0 538.6 L365.1 540.9 L364.0 544.9 L363.6 548.9Z" fill="none" stroke="#ff00ff" stroke-width="1.15"/>
<text x="361.80798941985813" y="536.3650703766177" fill="#ff00ff" font-family="Liberation Sans, sans-serif" font-size="12" text-anchor="middle" >8</text>
<path d="M17.0 672.5L9.8 680.3H24.2Z" fill="none" stroke="#ff00ff" stroke-width="1.1"/>
<path d="M25.3 672.5L18.1 680.3H32.5Z" fill="none" stroke="#ff00ff" stroke-width="1.1"/>
<path d="M35.7 672.5L28.5 680.3H42.9Z" fill="none" stroke="#ff00ff" stroke-width="1.1"/>
<path d="M66.9 672.5L59.7 680.3H74.1Z" fill="none" stroke="#ff00ff" stroke-width="1.1"/>
<path d="M118.8 672.5L111.6 680.3H126.0Z" fill="none" stroke="#ff00ff" stroke-width="1.1"/>
<path d="M222.7 672.5L215.5 680.3H229.9Z" fill="none" stroke="#ff00ff" stroke-width="1.1"/>
<path d="M430.5 672.5L423.3 680.3H437.7Z" fill="none" stroke="#ff00ff" stroke-width="1.1"/>
<path d="M193.1 672.5L185.9 680.3H200.3Z" fill="#ff00ff" stroke="#ff00ff" stroke-width="1.1"/>
</g>
</svg></body></html>
